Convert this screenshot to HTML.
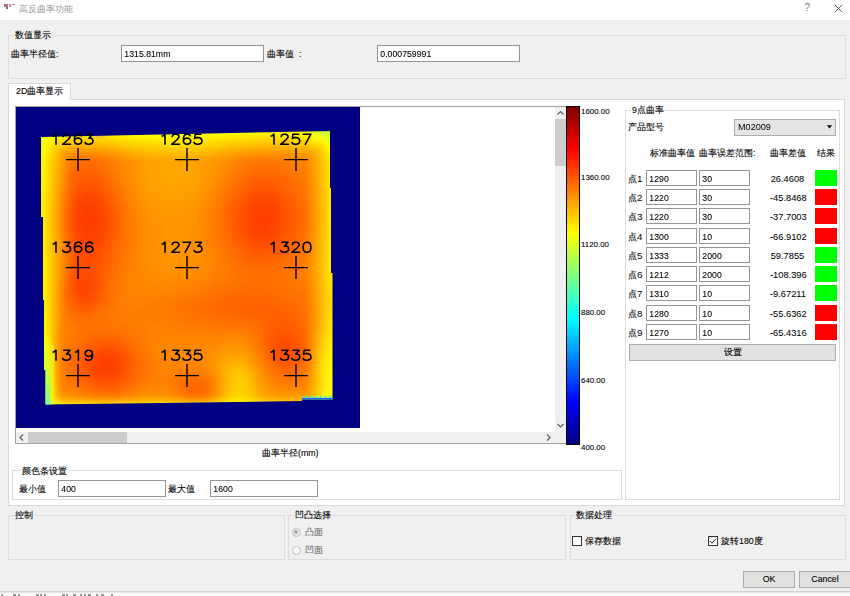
<!DOCTYPE html>
<html><head><meta charset="utf-8">
<style>
*{box-sizing:border-box;margin:0;padding:0}
html,body{width:850px;height:596px;overflow:hidden;background:#f0f0f0;font-family:"Liberation Sans",sans-serif;font-size:8.8px;color:#000}
.a{position:absolute}
.t{position:absolute;white-space:nowrap;line-height:10px;-webkit-text-stroke:0.1px #000}
.grp{position:absolute;border:1px solid #dcdcdc}
.gt{position:absolute;white-space:nowrap;line-height:10px;background:#f0f0f0;padding:0 1px;-webkit-text-stroke:0.1px #000}
.inp{position:absolute;background:#fff;border:1px solid #959595;white-space:nowrap;line-height:15px;padding-left:2px;font-size:9.3px;-webkit-text-stroke:0.05px #000}
.inp span{display:inline-block;font-size:9.8px;transform:scaleX(0.89);transform-origin:0 50%;padding-left:0.4px;-webkit-text-stroke:0.1px #000}
.btn{position:absolute;background:#e1e1e1;border:1px solid #adadad;text-align:center;line-height:15px;-webkit-text-stroke:0.1px #000}
.res{position:absolute;width:22px;height:17px}
</style></head><body>
<!-- title bar -->
<div class="a" style="left:0;top:0;width:850px;height:20px;background:#fff"></div>
<div class="a" style="left:4px;top:4px;width:4px;height:3px;background:#b07078"></div>
<div class="a" style="left:9px;top:4px;width:2px;height:3px;background:#c09090"></div>
<div class="a" style="left:6px;top:7px;width:2px;height:2px;background:#707070"></div>
<div class="a" style="left:12px;top:4px;width:3px;height:1px;background:#a09090"></div>
<div class="t" style="left:19px;top:4px;color:#999;-webkit-text-stroke:0">高反曲率功能</div>
<div class="t" style="left:804.5px;top:3px;color:#777;font-size:10px;-webkit-text-stroke:0">?</div>
<svg class="a" style="left:834px;top:4px" width="9" height="9"><path d="M0.8 0.8L8.2 8.2M8.2 0.8L0.8 8.2" stroke="#555" stroke-width="0.9"/></svg>

<!-- group 数值显示 -->
<div class="grp" style="left:8px;top:35px;width:838px;height:44px"></div>
<div class="gt" style="left:14px;top:30px">数值显示</div>
<div class="t" style="left:11px;top:49px">曲率半径值:</div>
<div class="inp" style="left:121px;top:45px;width:143px;height:17px"><span>1315.81mm</span></div>
<div class="t" style="left:267px;top:49px">曲率值 &nbsp;:</div>
<div class="inp" style="left:377px;top:45px;width:143px;height:17px"><span>0.000759991</span></div>

<!-- tab -->
<div class="a" style="left:8px;top:99px;width:837px;height:407px;background:#fff;border:1px solid #d9d9d9"></div>
<div class="a" style="left:8px;top:83px;width:63px;height:17px;background:#fff;border:1px solid #d9d9d9;border-bottom:none"></div>
<div class="t" style="left:16px;top:86px">2D曲率显示</div>

<!-- scroll area -->
<div class="a" style="left:15px;top:106px;width:552px;height:338px;border:1px solid #a2a2a2;background:#fff"></div>
<div class="a" style="left:16px;top:107px;width:344px;height:321px;background:#000080"></div>
<svg class="a" style="left:16px;top:107px" width="344" height="321" viewBox="16 107 344 321">
<defs><clipPath id="cp"><polygon points="41,137 330,131 330,188 331,188 331,273 332.5,273 332.5,399.5 302,399.5 302,401 45.5,404.5 45.5,370 44,370 44,300 43,300 43,217 41,217"/></clipPath>
<filter id="bl" x="-10%" y="-10%" width="120%" height="120%"><feGaussianBlur stdDeviation="2"/></filter>
</defs>
<g clip-path="url(#cp)"><g filter="url(#bl)">
<path fill="#d5ff2a" d="M38 128h4v4h-4zM322 132h4v4h-4zM42 368h4v4h-4zM46 388h4v4h-4zM334 400h4v4h-4zM250 404h4v4h-4z"/>
<path fill="#d9ff26" d="M42 128h4v4h-4zM314 128h4v4h-4zM38 132h4v4h-4zM42 364h4v4h-4zM38 384h4v4h-4zM46 384h4v4h-4zM38 388h4v4h-4zM326 400h4v4h-4zM222 404h4v4h-4zM254 404h4v4h-4zM310 404h4v4h-4z"/>
<path fill="#e1ff1e" d="M46 128h4v4h-4zM38 136h4v4h-4zM334 136h4v4h-4zM38 364h4v4h-4zM38 368h4v4h-4zM46 372h4v4h-4zM258 404h4v4h-4z"/>
<path fill="#e5ff1a" d="M50 128h4v4h-4zM310 128h4v4h-4zM326 136h4v4h-4zM38 140h4v4h-4zM38 356h8v4h-8zM38 360h4v4h-4zM46 368h4v4h-4zM322 400h4v4h-4zM218 404h4v4h-4zM262 404h4v4h-4z"/>
<path fill="#eaff15" d="M54 128h4v4h-4zM42 132h4v4h-4zM314 132h4v4h-4zM322 136h4v4h-4zM330 140h4v4h-4zM38 144h4v4h-4zM38 352h8v4h-8zM58 404h4v4h-4zM266 404h4v4h-4zM306 404h4v4h-4z"/>
<path fill="#f2ff0d" d="M58 128h4v4h-4zM130 128h16v4h-16zM202 128h16v4h-16zM306 128h4v4h-4zM42 140h4v4h-4zM38 148h4v4h-4zM38 332h4v4h-4zM38 336h4v4h-4zM38 340h4v4h-4zM42 344h4v4h-4zM46 360h4v4h-4zM334 396h4v4h-4zM274 404h32v4h-32z"/>
<path fill="#f6ff09" d="M62 128h4v4h-4zM122 128h8v4h-8zM218 128h16v4h-16zM302 128h4v4h-4zM50 132h4v4h-4zM166 132h16v4h-16zM310 132h4v4h-4zM318 136h4v4h-4zM326 140h4v4h-4zM330 144h4v4h-4zM38 152h4v4h-4zM38 320h4v4h-4zM38 324h4v4h-4zM38 328h4v4h-4zM46 356h4v4h-4zM326 396h4v4h-4zM62 404h12v4h-12zM138 404h32v4h-32zM210 404h4v4h-4z"/>
<path fill="#faff05" d="M66 128h4v4h-4zM110 128h12v4h-12zM234 128h24v4h-24zM290 128h12v4h-12zM54 132h4v4h-4zM146 132h20v4h-20zM182 132h20v4h-20zM42 144h4v4h-4zM334 144h4v4h-4zM38 156h4v4h-4zM38 296h4v4h-4zM38 300h4v4h-4zM38 304h4v4h-4zM38 308h4v4h-4zM38 312h4v4h-4zM38 316h4v4h-4zM42 336h4v4h-4zM42 340h4v4h-4zM330 392h4v4h-4zM318 400h4v4h-4zM74 404h12v4h-12zM126 404h12v4h-12zM170 404h8v4h-8zM206 404h4v4h-4z"/>
<path fill="#feff01" d="M70 128h8v4h-8zM94 128h16v4h-16zM258 128h32v4h-32zM58 132h4v4h-4zM134 132h12v4h-12zM202 132h16v4h-16zM306 132h4v4h-4zM46 136h4v4h-4zM314 136h4v4h-4zM42 148h4v4h-4zM38 160h4v4h-4zM38 164h4v4h-4zM38 168h4v4h-4zM38 172h4v4h-4zM38 176h4v4h-4zM38 180h4v4h-4zM38 260h4v4h-4zM38 264h4v4h-4zM38 268h4v4h-4zM38 272h4v4h-4zM38 276h4v4h-4zM38 280h4v4h-4zM38 284h4v4h-4zM38 288h4v4h-4zM38 292h4v4h-4zM42 332h4v4h-4zM46 352h4v4h-4zM330 388h4v4h-4zM50 396h4v4h-4zM86 404h12v4h-12zM114 404h12v4h-12zM178 404h8v4h-8zM202 404h4v4h-4z"/>
<path fill="#fffc00" d="M78 128h16v4h-16zM62 132h4v4h-4zM126 132h8v4h-8zM218 132h12v4h-12zM326 144h4v4h-4zM330 148h8v4h-8zM38 184h4v4h-4zM38 188h4v4h-4zM38 192h4v4h-4zM38 196h4v4h-4zM38 200h4v4h-4zM38 204h4v4h-4zM38 208h4v4h-4zM38 212h4v4h-4zM38 216h4v4h-4zM38 220h4v4h-4zM38 224h4v4h-4zM38 228h4v4h-4zM38 232h4v4h-4zM38 236h4v4h-4zM38 240h4v4h-4zM38 244h4v4h-4zM38 248h4v4h-4zM38 252h4v4h-4zM38 256h4v4h-4zM42 328h4v4h-4zM46 348h4v4h-4zM330 364h4v4h-4zM330 368h4v4h-4zM330 372h4v4h-4zM330 376h4v4h-4zM330 380h4v4h-4zM330 384h4v4h-4zM326 392h4v4h-4zM334 392h4v4h-4zM322 396h4v4h-4zM98 404h16v4h-16zM186 404h16v4h-16z"/>
<path fill="#eeff11" d="M146 128h56v4h-56zM46 132h4v4h-4zM42 136h4v4h-4zM334 140h4v4h-4zM38 344h4v4h-4zM38 348h8v4h-8zM46 364h4v4h-4zM330 396h4v4h-4zM214 404h4v4h-4zM270 404h4v4h-4z"/>
<path fill="#d1ff2e" d="M318 128h4v4h-4zM42 372h4v4h-4zM38 392h4v4h-4zM46 392h4v4h-4zM226 404h4v4h-4z"/>
<path fill="#c5ff3a" d="M322 128h4v4h-4zM42 392h4v4h-4zM38 396h4v4h-4z"/>
<path fill="#bdff42" d="M326 128h8v4h-8z"/>
<path fill="#c1ff3e" d="M334 128h4v4h-4z"/>
<path fill="#fff400" d="M66 132h4v4h-4zM106 132h8v4h-8zM242 132h56v4h-56zM146 136h20v4h-20zM186 136h16v4h-16zM310 136h4v4h-4zM46 144h4v4h-4zM330 152h8v4h-8zM42 156h4v4h-4zM42 160h4v4h-4zM42 300h4v4h-4zM42 304h4v4h-4zM42 308h4v4h-4zM42 312h4v4h-4zM46 344h4v4h-4zM330 348h4v4h-4zM330 352h4v4h-4zM326 360h4v4h-4zM334 360h4v4h-4zM326 364h4v4h-4zM334 364h4v4h-4zM326 368h4v4h-4zM334 368h4v4h-4zM334 372h4v4h-4zM334 376h4v4h-4zM334 380h4v4h-4zM334 384h4v4h-4zM50 392h4v4h-4zM234 400h4v4h-4zM242 400h4v4h-4z"/>
<path fill="#fff000" d="M70 132h36v4h-36zM54 136h4v4h-4zM134 136h12v4h-12zM202 136h12v4h-12zM318 140h4v4h-4zM326 148h4v4h-4zM42 164h4v4h-4zM42 168h4v4h-4zM42 172h4v4h-4zM42 176h4v4h-4zM42 180h4v4h-4zM42 184h4v4h-4zM42 256h4v4h-4zM42 260h4v4h-4zM42 264h4v4h-4zM42 268h4v4h-4zM42 272h4v4h-4zM42 276h4v4h-4zM42 280h4v4h-4zM42 284h4v4h-4zM42 288h4v4h-4zM42 292h4v4h-4zM42 296h4v4h-4zM46 340h4v4h-4zM330 340h4v4h-4zM330 344h4v4h-4zM334 348h4v4h-4zM334 352h4v4h-4zM326 356h4v4h-4zM334 356h4v4h-4zM50 388h4v4h-4zM322 392h4v4h-4zM230 400h4v4h-4zM246 400h4v4h-4zM314 400h4v4h-4z"/>
<path fill="#fff800" d="M114 132h12v4h-12zM230 132h12v4h-12zM298 132h8v4h-8zM50 136h4v4h-4zM166 136h20v4h-20zM46 140h4v4h-4zM322 140h4v4h-4zM42 152h4v4h-4zM42 316h4v4h-4zM42 320h4v4h-4zM42 324h4v4h-4zM330 356h4v4h-4zM330 360h4v4h-4zM326 372h4v4h-4zM326 376h4v4h-4zM326 380h4v4h-4zM326 384h4v4h-4zM326 388h4v4h-4zM334 388h4v4h-4zM238 400h4v4h-4z"/>
<path fill="#ddff22" d="M318 132h4v4h-4zM330 136h4v4h-4zM42 360h4v4h-4zM38 372h4v4h-4zM38 376h4v4h-4zM46 376h4v4h-4zM38 380h4v4h-4zM46 380h4v4h-4zM50 400h4v4h-4z"/>
<path fill="#cdff32" d="M326 132h4v4h-4zM334 132h4v4h-4zM42 376h4v4h-4zM42 380h4v4h-4zM330 400h4v4h-4zM54 404h4v4h-4zM230 404h4v4h-4zM246 404h4v4h-4z"/>
<path fill="#c9ff36" d="M330 132h4v4h-4zM42 384h4v4h-4zM42 388h4v4h-4zM46 396h4v4h-4zM234 404h12v4h-12zM314 404h4v4h-4z"/>
<path fill="#ffec00" d="M58 136h4v4h-4zM126 136h8v4h-8zM214 136h12v4h-12zM306 136h4v4h-4zM46 148h4v4h-4zM330 156h8v4h-8zM334 160h4v4h-4zM42 188h4v4h-4zM42 192h4v4h-4zM42 196h4v4h-4zM42 200h4v4h-4zM42 204h4v4h-4zM42 208h4v4h-4zM42 212h4v4h-4zM42 216h4v4h-4zM42 220h4v4h-4zM42 224h4v4h-4zM42 228h4v4h-4zM42 232h4v4h-4zM42 236h4v4h-4zM42 240h4v4h-4zM42 244h4v4h-4zM42 248h4v4h-4zM42 252h4v4h-4zM330 332h4v4h-4zM46 336h4v4h-4zM330 336h8v4h-8zM334 340h4v4h-4zM334 344h4v4h-4zM326 352h4v4h-4zM50 384h4v4h-4zM322 388h4v4h-4zM54 400h4v4h-4z"/>
<path fill="#ffe800" d="M62 136h4v4h-4zM118 136h8v4h-8zM226 136h8v4h-8zM302 136h4v4h-4zM50 140h4v4h-4zM162 140h28v4h-28zM314 140h4v4h-4zM322 144h4v4h-4zM46 152h4v4h-4zM326 152h4v4h-4zM330 160h4v4h-4zM330 164h8v4h-8zM330 168h8v4h-8zM330 172h8v4h-8zM330 176h8v4h-8zM330 180h8v4h-8zM330 184h8v4h-8zM330 188h8v4h-8zM330 192h8v4h-8zM330 196h8v4h-8zM330 200h8v4h-8zM330 204h8v4h-8zM330 208h8v4h-8zM330 212h8v4h-8zM330 216h8v4h-8zM330 220h8v4h-8zM330 224h8v4h-8zM330 228h8v4h-8zM330 232h8v4h-8zM330 236h8v4h-8zM330 240h8v4h-8zM330 244h8v4h-8zM330 248h8v4h-8zM330 252h8v4h-8zM330 256h8v4h-8zM330 260h8v4h-8zM330 264h8v4h-8zM330 268h8v4h-8zM330 272h8v4h-8zM330 276h8v4h-8zM330 280h8v4h-8zM330 324h4v4h-4zM330 328h8v4h-8zM46 332h4v4h-4zM334 332h4v4h-4zM326 344h4v4h-4zM326 348h4v4h-4zM322 368h4v4h-4zM322 372h4v4h-4zM50 376h4v4h-4zM322 376h4v4h-4zM50 380h4v4h-4zM322 380h4v4h-4zM322 384h4v4h-4zM318 396h4v4h-4zM226 400h4v4h-4zM250 400h4v4h-4z"/>
<path fill="#ffe300" d="M66 136h4v4h-4zM110 136h8v4h-8zM234 136h16v4h-16zM294 136h8v4h-8zM146 140h16v4h-16zM190 140h12v4h-12zM46 156h4v4h-4zM330 284h8v4h-8zM330 288h8v4h-8zM330 292h8v4h-8zM334 296h4v4h-4zM330 316h8v4h-8zM330 320h8v4h-8zM46 324h4v4h-4zM334 324h4v4h-4zM46 328h4v4h-4zM326 340h4v4h-4zM322 360h4v4h-4zM322 364h4v4h-4zM50 368h4v4h-4zM50 372h4v4h-4z"/>
<path fill="#ffdb00" d="M70 136h32v4h-32zM130 140h8v4h-8zM214 140h8v4h-8zM50 148h4v4h-4zM322 148h4v4h-4zM326 160h4v4h-4zM326 164h4v4h-4zM326 168h4v4h-4zM46 172h4v4h-4zM326 172h4v4h-4zM46 176h4v4h-4zM326 176h4v4h-4zM46 180h4v4h-4zM46 184h4v4h-4zM46 256h4v4h-4zM326 256h4v4h-4zM46 260h4v4h-4zM326 260h4v4h-4zM46 264h4v4h-4zM326 264h4v4h-4zM46 268h4v4h-4zM326 268h4v4h-4zM46 272h4v4h-4zM326 272h4v4h-4zM46 276h4v4h-4zM46 280h4v4h-4zM46 284h4v4h-4zM46 288h4v4h-4zM46 292h4v4h-4zM46 296h4v4h-4zM46 300h4v4h-4zM46 304h4v4h-4zM46 308h4v4h-4zM326 328h4v4h-4zM322 352h4v4h-4zM50 360h4v4h-4zM318 392h4v4h-4zM234 396h12v4h-12zM222 400h4v4h-4zM310 400h4v4h-4z"/>
<path fill="#ffdf00" d="M102 136h8v4h-8zM250 136h44v4h-44zM54 140h4v4h-4zM138 140h8v4h-8zM202 140h12v4h-12zM310 140h4v4h-4zM50 144h4v4h-4zM326 156h4v4h-4zM46 160h4v4h-4zM46 164h4v4h-4zM46 168h4v4h-4zM330 296h4v4h-4zM330 300h8v4h-8zM330 304h8v4h-8zM330 308h8v4h-8zM46 312h4v4h-4zM330 312h8v4h-8zM46 316h4v4h-4zM46 320h4v4h-4zM326 332h4v4h-4zM326 336h4v4h-4zM322 356h4v4h-4zM50 364h4v4h-4zM254 400h4v4h-4z"/>
<path fill="#ffd700" d="M58 140h4v4h-4zM122 140h8v4h-8zM222 140h8v4h-8zM306 140h4v4h-4zM158 144h32v4h-32zM318 144h4v4h-4zM326 180h4v4h-4zM326 184h4v4h-4zM46 188h4v4h-4zM326 188h4v4h-4zM46 192h4v4h-4zM326 192h4v4h-4zM46 196h4v4h-4zM326 196h4v4h-4zM46 200h4v4h-4zM326 200h4v4h-4zM46 204h4v4h-4zM326 204h4v4h-4zM326 208h4v4h-4zM326 212h4v4h-4zM326 216h4v4h-4zM326 220h4v4h-4zM326 224h4v4h-4zM326 228h4v4h-4zM46 232h4v4h-4zM326 232h4v4h-4zM46 236h4v4h-4zM326 236h4v4h-4zM46 240h4v4h-4zM326 240h4v4h-4zM46 244h4v4h-4zM326 244h4v4h-4zM46 248h4v4h-4zM326 248h4v4h-4zM46 252h4v4h-4zM326 252h4v4h-4zM326 276h4v4h-4zM326 280h4v4h-4zM326 284h4v4h-4zM326 320h4v4h-4zM326 324h4v4h-4zM322 348h4v4h-4zM50 356h4v4h-4zM318 388h4v4h-4zM258 400h4v4h-4z"/>
<path fill="#ffd300" d="M62 140h4v4h-4zM114 140h8v4h-8zM230 140h12v4h-12zM302 140h4v4h-4zM146 144h12v4h-12zM190 144h12v4h-12zM314 144h4v4h-4zM50 152h4v4h-4zM322 152h4v4h-4zM46 208h4v4h-4zM46 212h4v4h-4zM46 216h4v4h-4zM46 220h4v4h-4zM46 224h4v4h-4zM46 228h4v4h-4zM326 288h4v4h-4zM326 292h4v4h-4zM326 296h4v4h-4zM326 300h4v4h-4zM326 304h4v4h-4zM326 308h4v4h-4zM326 312h4v4h-4zM326 316h4v4h-4zM322 340h4v4h-4zM322 344h4v4h-4zM50 352h4v4h-4zM318 372h4v4h-4zM318 376h4v4h-4zM318 380h4v4h-4zM318 384h4v4h-4zM238 392h4v4h-4zM230 396h4v4h-4zM246 396h4v4h-4zM314 396h4v4h-4zM218 400h4v4h-4zM262 400h4v4h-4z"/>
<path fill="#ffcf00" d="M66 140h4v4h-4zM110 140h4v4h-4zM242 140h12v4h-12zM290 140h12v4h-12zM54 144h4v4h-4zM138 144h8v4h-8zM202 144h12v4h-12zM50 156h4v4h-4zM322 156h4v4h-4zM322 336h4v4h-4zM50 348h4v4h-4zM318 364h4v4h-4zM318 368h4v4h-4zM238 380h4v4h-4zM238 384h4v4h-4zM234 388h8v4h-8zM234 392h4v4h-4zM242 392h4v4h-4z"/>
<path fill="#ffcb00" d="M70 140h4v4h-4zM102 140h8v4h-8zM254 140h36v4h-36zM130 144h8v4h-8zM214 144h8v4h-8zM310 144h4v4h-4zM54 148h4v4h-4zM318 148h4v4h-4zM50 160h4v4h-4zM322 160h4v4h-4zM50 164h4v4h-4zM322 164h4v4h-4zM50 168h4v4h-4zM322 332h4v4h-4zM50 340h4v4h-4zM50 344h4v4h-4zM318 360h4v4h-4zM234 376h8v4h-8zM234 380h4v4h-4zM242 380h4v4h-4zM234 384h4v4h-4zM242 384h4v4h-4zM242 388h4v4h-4zM230 392h4v4h-4zM246 392h4v4h-4zM54 396h4v4h-4zM226 396h4v4h-4zM250 396h4v4h-4zM58 400h4v4h-4zM266 400h4v4h-4zM306 400h4v4h-4z"/>
<path fill="#ffc700" d="M74 140h28v4h-28zM58 144h4v4h-4zM126 144h4v4h-4zM222 144h4v4h-4zM154 148h40v4h-40zM322 168h4v4h-4zM50 172h4v4h-4zM322 172h4v4h-4zM50 176h4v4h-4zM322 176h4v4h-4zM50 180h4v4h-4zM322 180h4v4h-4zM322 184h4v4h-4zM322 188h4v4h-4zM322 192h4v4h-4zM322 240h4v4h-4zM322 244h4v4h-4zM322 248h4v4h-4zM322 252h4v4h-4zM50 256h4v4h-4zM322 256h4v4h-4zM50 260h4v4h-4zM322 260h4v4h-4zM50 264h4v4h-4zM322 264h4v4h-4zM50 268h4v4h-4zM322 268h4v4h-4zM322 272h4v4h-4zM322 276h4v4h-4zM322 280h4v4h-4zM50 316h4v4h-4zM50 320h4v4h-4zM50 324h4v4h-4zM322 324h4v4h-4zM50 328h4v4h-4zM322 328h4v4h-4zM50 332h4v4h-4zM50 336h4v4h-4zM318 352h4v4h-4zM318 356h4v4h-4zM234 372h8v4h-8zM242 376h4v4h-4zM230 380h4v4h-4zM230 384h4v4h-4zM230 388h4v4h-4zM246 388h4v4h-4zM214 400h4v4h-4zM270 400h8v4h-8z"/>
<path fill="#ffbf00" d="M62 144h4v4h-4zM114 144h4v4h-4zM234 144h12v4h-12zM298 144h8v4h-8zM138 148h8v4h-8zM206 148h8v4h-8zM54 156h4v4h-4zM50 200h4v4h-4zM50 204h4v4h-4zM50 208h4v4h-4zM50 212h4v4h-4zM50 216h4v4h-4zM50 220h4v4h-4zM50 224h4v4h-4zM50 228h4v4h-4zM50 232h4v4h-4zM50 236h4v4h-4zM322 296h4v4h-4zM322 300h4v4h-4zM322 304h4v4h-4zM322 308h4v4h-4zM322 312h4v4h-4zM318 344h4v4h-4zM234 368h8v4h-8zM230 372h4v4h-4zM246 376h4v4h-4zM314 388h4v4h-4zM226 392h4v4h-4zM250 392h4v4h-4zM222 396h4v4h-4zM310 396h4v4h-4zM62 400h12v4h-12zM142 400h28v4h-28z"/>
<path fill="#ffbb00" d="M66 144h4v4h-4zM106 144h8v4h-8zM246 144h16v4h-16zM278 144h20v4h-20zM130 148h8v4h-8zM214 148h4v4h-4zM314 148h4v4h-4zM162 152h24v4h-24zM318 156h4v4h-4zM54 160h4v4h-4zM318 336h4v4h-4zM318 340h4v4h-4zM230 368h4v4h-4zM242 368h4v4h-4zM246 372h4v4h-4zM226 376h4v4h-4zM314 376h4v4h-4zM226 380h4v4h-4zM314 380h4v4h-4zM226 384h4v4h-4zM250 384h4v4h-4zM314 384h4v4h-4zM226 388h4v4h-4zM250 388h4v4h-4zM54 392h4v4h-4zM258 396h4v4h-4zM74 400h8v4h-8zM130 400h12v4h-12zM170 400h4v4h-4zM210 400h4v4h-4z"/>
<path fill="#ffb700" d="M70 144h4v4h-4zM98 144h8v4h-8zM262 144h16v4h-16zM58 148h4v4h-4zM126 148h4v4h-4zM218 148h8v4h-8zM310 148h4v4h-4zM150 152h12v4h-12zM186 152h12v4h-12zM318 160h4v4h-4zM54 164h4v4h-4zM318 164h4v4h-4zM54 168h4v4h-4zM318 168h4v4h-4zM54 172h4v4h-4zM318 172h4v4h-4zM318 176h4v4h-4zM318 180h4v4h-4zM318 256h4v4h-4zM318 260h4v4h-4zM318 264h4v4h-4zM318 268h4v4h-4zM318 272h4v4h-4zM318 276h4v4h-4zM318 332h4v4h-4zM230 364h12v4h-12zM226 368h4v4h-4zM314 368h4v4h-4zM226 372h4v4h-4zM314 372h4v4h-4zM250 380h4v4h-4zM54 388h4v4h-4zM254 392h4v4h-4zM82 400h8v4h-8zM122 400h8v4h-8zM174 400h8v4h-8z"/>
<path fill="#ffb200" d="M74 144h24v4h-24zM122 148h4v4h-4zM226 148h8v4h-8zM58 152h4v4h-4zM142 152h8v4h-8zM198 152h8v4h-8zM314 152h4v4h-4zM54 176h4v4h-4zM54 180h4v4h-4zM318 184h4v4h-4zM318 188h4v4h-4zM318 192h4v4h-4zM318 196h4v4h-4zM318 200h4v4h-4zM318 204h4v4h-4zM318 228h4v4h-4zM318 232h4v4h-4zM318 236h4v4h-4zM318 240h4v4h-4zM318 244h4v4h-4zM318 248h4v4h-4zM318 252h4v4h-4zM318 280h4v4h-4zM318 284h4v4h-4zM318 288h4v4h-4zM318 324h4v4h-4zM318 328h4v4h-4zM234 360h4v4h-4zM314 360h4v4h-4zM242 364h4v4h-4zM314 364h4v4h-4zM246 368h4v4h-4zM250 376h4v4h-4zM54 384h4v4h-4zM254 388h4v4h-4zM262 396h4v4h-4zM90 400h12v4h-12zM110 400h12v4h-12zM182 400h4v4h-4zM206 400h4v4h-4z"/>
<path fill="#ffc300" d="M118 144h8v4h-8zM226 144h8v4h-8zM306 144h4v4h-4zM146 148h8v4h-8zM194 148h12v4h-12zM54 152h4v4h-4zM318 152h4v4h-4zM50 184h4v4h-4zM50 188h4v4h-4zM50 192h4v4h-4zM50 196h4v4h-4zM322 196h4v4h-4zM322 200h4v4h-4zM322 204h4v4h-4zM322 208h4v4h-4zM322 212h4v4h-4zM322 216h4v4h-4zM322 220h4v4h-4zM322 224h4v4h-4zM322 228h4v4h-4zM322 232h4v4h-4zM322 236h4v4h-4zM50 240h4v4h-4zM50 244h4v4h-4zM50 248h4v4h-4zM50 252h4v4h-4zM50 272h4v4h-4zM50 276h4v4h-4zM50 280h4v4h-4zM50 284h4v4h-4zM322 284h4v4h-4zM50 288h4v4h-4zM322 288h4v4h-4zM50 292h4v4h-4zM322 292h4v4h-4zM50 296h4v4h-4zM50 300h4v4h-4zM50 304h4v4h-4zM50 308h4v4h-4zM50 312h4v4h-4zM322 316h4v4h-4zM322 320h4v4h-4zM318 348h4v4h-4zM242 372h4v4h-4zM230 376h4v4h-4zM246 380h4v4h-4zM246 384h4v4h-4zM314 392h4v4h-4zM254 396h4v4h-4zM278 400h28v4h-28z"/>
<path fill="#ffae00" d="M62 148h4v4h-4zM114 148h8v4h-8zM234 148h8v4h-8zM306 148h4v4h-4zM134 152h8v4h-8zM206 152h8v4h-8zM174 156h4v4h-4zM54 184h4v4h-4zM54 188h4v4h-4zM54 192h4v4h-4zM318 208h4v4h-4zM318 212h4v4h-4zM318 216h4v4h-4zM318 220h4v4h-4zM318 224h4v4h-4zM54 244h4v4h-4zM54 248h4v4h-4zM54 252h4v4h-4zM54 256h4v4h-4zM54 260h4v4h-4zM54 264h4v4h-4zM54 268h4v4h-4zM54 272h4v4h-4zM54 276h4v4h-4zM54 280h4v4h-4zM318 292h4v4h-4zM318 296h4v4h-4zM318 300h4v4h-4zM318 308h4v4h-4zM318 312h4v4h-4zM318 316h4v4h-4zM318 320h4v4h-4zM314 356h4v4h-4zM230 360h4v4h-4zM238 360h4v4h-4zM226 364h4v4h-4zM246 364h4v4h-4zM222 372h4v4h-4zM250 372h4v4h-4zM54 376h4v4h-4zM222 376h4v4h-4zM54 380h4v4h-4zM254 384h4v4h-4zM222 392h4v4h-4zM258 392h4v4h-4zM310 392h4v4h-4zM218 396h4v4h-4zM306 396h4v4h-4zM102 400h8v4h-8zM186 400h4v4h-4zM202 400h4v4h-4z"/>
<path fill="#ffa600" d="M66 148h4v4h-4zM106 148h4v4h-4zM250 148h44v4h-44zM126 152h4v4h-4zM218 152h8v4h-8zM146 156h8v4h-8zM194 156h8v4h-8zM58 160h4v4h-4zM158 160h32v4h-32zM314 160h4v4h-4zM58 164h4v4h-4zM158 164h32v4h-32zM314 164h4v4h-4zM154 168h36v4h-36zM314 168h4v4h-4zM158 172h32v4h-32zM314 172h4v4h-4zM158 176h32v4h-32zM162 180h24v4h-24zM166 184h12v4h-12zM54 212h4v4h-4zM54 216h4v4h-4zM54 220h4v4h-4zM54 224h4v4h-4zM314 260h4v4h-4zM314 264h4v4h-4zM314 268h4v4h-4zM314 272h4v4h-4zM314 276h4v4h-4zM54 332h4v4h-4zM54 336h4v4h-4zM54 340h4v4h-4zM314 340h4v4h-4zM54 344h4v4h-4zM314 344h4v4h-4zM54 348h4v4h-4zM54 352h4v4h-4zM54 356h4v4h-4zM230 356h4v4h-4zM238 356h4v4h-4zM54 360h4v4h-4zM246 360h4v4h-4zM254 376h4v4h-4zM310 384h4v4h-4zM258 388h4v4h-4zM270 396h8v4h-8z"/>
<path fill="#ffa200" d="M70 148h4v4h-4zM98 148h8v4h-8zM62 152h4v4h-4zM122 152h4v4h-4zM226 152h4v4h-4zM310 152h4v4h-4zM138 156h8v4h-8zM202 156h8v4h-8zM150 160h8v4h-8zM190 160h8v4h-8zM150 164h8v4h-8zM190 164h8v4h-8zM58 168h4v4h-4zM150 168h4v4h-4zM190 168h8v4h-8zM58 172h4v4h-4zM150 172h8v4h-8zM190 172h8v4h-8zM150 176h8v4h-8zM190 176h8v4h-8zM314 176h4v4h-4zM150 180h12v4h-12zM186 180h8v4h-8zM314 180h4v4h-4zM154 184h12v4h-12zM178 184h12v4h-12zM314 184h4v4h-4zM158 188h28v4h-28zM314 188h4v4h-4zM162 192h20v4h-20zM314 192h4v4h-4zM314 244h4v4h-4zM314 248h4v4h-4zM314 252h4v4h-4zM314 256h4v4h-4zM314 280h4v4h-4zM314 284h4v4h-4zM314 288h4v4h-4zM314 332h4v4h-4zM314 336h4v4h-4zM234 352h4v4h-4zM226 356h4v4h-4zM242 356h4v4h-4zM222 360h4v4h-4zM218 364h4v4h-4zM250 364h4v4h-4zM218 368h4v4h-4zM218 372h4v4h-4zM254 372h4v4h-4zM310 376h4v4h-4zM310 380h4v4h-4zM258 384h4v4h-4zM218 392h4v4h-4zM262 392h4v4h-4zM214 396h4v4h-4zM278 396h28v4h-28z"/>
<path fill="#ff9e00" d="M74 148h24v4h-24zM118 152h4v4h-4zM230 152h8v4h-8zM306 152h4v4h-4zM134 156h4v4h-4zM210 156h4v4h-4zM142 160h8v4h-8zM198 160h8v4h-8zM142 164h8v4h-8zM198 164h8v4h-8zM142 168h8v4h-8zM198 168h8v4h-8zM142 172h8v4h-8zM198 172h4v4h-4zM58 176h4v4h-4zM146 176h4v4h-4zM198 176h4v4h-4zM58 180h4v4h-4zM146 180h4v4h-4zM194 180h8v4h-8zM146 184h8v4h-8zM190 184h8v4h-8zM150 188h8v4h-8zM186 188h8v4h-8zM154 192h8v4h-8zM182 192h12v4h-12zM158 196h32v4h-32zM314 196h4v4h-4zM162 200h20v4h-20zM314 200h4v4h-4zM314 204h4v4h-4zM314 208h4v4h-4zM314 212h4v4h-4zM314 216h4v4h-4zM314 220h4v4h-4zM314 224h4v4h-4zM314 228h4v4h-4zM314 232h4v4h-4zM314 236h4v4h-4zM314 240h4v4h-4zM314 292h4v4h-4zM314 296h4v4h-4zM314 320h4v4h-4zM314 324h4v4h-4zM314 328h4v4h-4zM226 352h8v4h-8zM238 352h8v4h-8zM222 356h4v4h-4zM246 356h4v4h-4zM218 360h4v4h-4zM254 368h4v4h-4zM310 372h4v4h-4zM218 376h4v4h-4zM218 380h4v4h-4zM258 380h4v4h-4zM262 388h4v4h-4zM266 392h4v4h-4zM306 392h4v4h-4zM62 396h8v4h-8zM142 396h24v4h-24z"/>
<path fill="#ffaa00" d="M110 148h4v4h-4zM242 148h8v4h-8zM294 148h12v4h-12zM130 152h4v4h-4zM214 152h4v4h-4zM58 156h4v4h-4zM154 156h20v4h-20zM178 156h16v4h-16zM314 156h4v4h-4zM54 196h4v4h-4zM54 200h4v4h-4zM54 204h4v4h-4zM54 208h4v4h-4zM54 228h4v4h-4zM54 232h4v4h-4zM54 236h4v4h-4zM54 240h4v4h-4zM54 284h4v4h-4zM54 288h4v4h-4zM54 292h4v4h-4zM54 296h4v4h-4zM54 300h4v4h-4zM54 304h4v4h-4zM318 304h4v4h-4zM54 308h4v4h-4zM54 312h4v4h-4zM54 316h4v4h-4zM54 320h4v4h-4zM54 324h4v4h-4zM54 328h4v4h-4zM314 348h4v4h-4zM314 352h4v4h-4zM234 356h4v4h-4zM226 360h4v4h-4zM242 360h4v4h-4zM54 364h4v4h-4zM222 364h4v4h-4zM54 368h4v4h-4zM222 368h4v4h-4zM250 368h4v4h-4zM54 372h4v4h-4zM222 380h4v4h-4zM254 380h4v4h-4zM222 384h4v4h-4zM222 388h4v4h-4zM310 388h4v4h-4zM58 396h4v4h-4zM266 396h4v4h-4zM190 400h12v4h-12z"/>
<path fill="#ff9600" d="M66 152h4v4h-4zM106 152h8v4h-8zM246 152h8v4h-8zM282 152h16v4h-16zM126 156h4v4h-4zM222 156h4v4h-4zM62 160h4v4h-4zM134 160h4v4h-4zM210 160h8v4h-8zM62 164h4v4h-4zM134 164h4v4h-4zM210 164h4v4h-4zM310 164h4v4h-4zM134 168h4v4h-4zM210 168h4v4h-4zM310 168h4v4h-4zM134 172h4v4h-4zM210 172h4v4h-4zM310 172h4v4h-4zM134 176h4v4h-4zM206 176h4v4h-4zM138 180h4v4h-4zM206 180h4v4h-4zM138 184h4v4h-4zM202 184h4v4h-4zM138 188h8v4h-8zM202 188h4v4h-4zM58 192h4v4h-4zM142 192h4v4h-4zM198 192h4v4h-4zM58 196h4v4h-4zM142 196h8v4h-8zM194 196h8v4h-8zM58 200h4v4h-4zM146 200h4v4h-4zM194 200h4v4h-4zM146 204h8v4h-8zM190 204h8v4h-8zM150 208h8v4h-8zM186 208h8v4h-8zM154 212h8v4h-8zM182 212h8v4h-8zM154 216h36v4h-36zM158 220h32v4h-32zM158 224h28v4h-28zM162 228h24v4h-24zM162 232h24v4h-24zM58 236h4v4h-4zM162 236h24v4h-24zM58 240h4v4h-4zM162 240h24v4h-24zM58 244h4v4h-4zM162 244h24v4h-24zM162 248h24v4h-24zM166 252h20v4h-20zM166 256h20v4h-20zM170 260h12v4h-12zM310 260h4v4h-4zM310 264h4v4h-4zM310 268h4v4h-4zM310 272h4v4h-4zM58 276h4v4h-4zM310 276h4v4h-4zM58 280h4v4h-4zM58 308h4v4h-4zM58 312h4v4h-4zM58 316h4v4h-4zM58 320h4v4h-4zM222 348h8v4h-8zM242 348h4v4h-4zM218 352h4v4h-4zM246 352h4v4h-4zM214 356h4v4h-4zM250 356h4v4h-4zM214 360h4v4h-4zM310 360h4v4h-4zM254 364h4v4h-4zM214 368h4v4h-4zM214 372h4v4h-4zM258 372h4v4h-4zM262 380h4v4h-4zM266 388h4v4h-4zM306 388h4v4h-4zM274 392h4v4h-4zM74 396h8v4h-8zM130 396h8v4h-8zM174 396h4v4h-4zM210 396h4v4h-4z"/>
<path fill="#ff9200" d="M70 152h4v4h-4zM102 152h4v4h-4zM254 152h28v4h-28zM122 156h4v4h-4zM226 156h4v4h-4zM126 160h8v4h-8zM218 160h4v4h-4zM130 164h4v4h-4zM214 164h4v4h-4zM62 168h4v4h-4zM130 168h4v4h-4zM214 168h4v4h-4zM130 172h4v4h-4zM214 172h4v4h-4zM130 176h4v4h-4zM210 176h4v4h-4zM310 176h4v4h-4zM134 180h4v4h-4zM210 180h4v4h-4zM310 180h4v4h-4zM134 184h4v4h-4zM206 184h4v4h-4zM310 184h4v4h-4zM206 188h4v4h-4zM138 192h4v4h-4zM202 192h4v4h-4zM138 196h4v4h-4zM202 196h4v4h-4zM142 200h4v4h-4zM198 200h4v4h-4zM58 204h4v4h-4zM142 204h4v4h-4zM198 204h4v4h-4zM58 208h4v4h-4zM146 208h4v4h-4zM194 208h4v4h-4zM58 212h4v4h-4zM146 212h8v4h-8zM190 212h8v4h-8zM58 216h4v4h-4zM150 216h4v4h-4zM190 216h8v4h-8zM58 220h4v4h-4zM150 220h8v4h-8zM190 220h4v4h-4zM58 224h4v4h-4zM150 224h8v4h-8zM186 224h8v4h-8zM58 228h4v4h-4zM150 228h12v4h-12zM186 228h8v4h-8zM58 232h4v4h-4zM154 232h8v4h-8zM186 232h8v4h-8zM154 236h8v4h-8zM186 236h8v4h-8zM154 240h8v4h-8zM186 240h8v4h-8zM154 244h8v4h-8zM186 244h8v4h-8zM154 248h8v4h-8zM186 248h12v4h-12zM310 248h4v4h-4zM154 252h12v4h-12zM186 252h12v4h-12zM310 252h4v4h-4zM154 256h12v4h-12zM186 256h12v4h-12zM310 256h4v4h-4zM154 260h16v4h-16zM182 260h12v4h-12zM158 264h36v4h-36zM162 268h28v4h-28zM170 272h8v4h-8zM310 280h4v4h-4zM58 284h4v4h-4zM310 284h4v4h-4zM58 288h4v4h-4zM310 288h4v4h-4zM58 292h4v4h-4zM58 296h4v4h-4zM58 300h4v4h-4zM58 304h4v4h-4zM58 324h4v4h-4zM58 328h4v4h-4zM222 344h20v4h-20zM218 348h4v4h-4zM246 348h4v4h-4zM214 352h4v4h-4zM310 352h4v4h-4zM210 356h4v4h-4zM310 356h4v4h-4zM210 360h4v4h-4zM254 360h4v4h-4zM210 364h4v4h-4zM258 368h4v4h-4zM214 376h4v4h-4zM262 376h4v4h-4zM266 384h4v4h-4zM306 384h4v4h-4zM58 388h4v4h-4zM270 388h4v4h-4zM214 392h4v4h-4zM278 392h28v4h-28zM82 396h8v4h-8zM122 396h8v4h-8zM178 396h4v4h-4z"/>
<path fill="#ff8e00" d="M74 152h4v4h-4zM94 152h8v4h-8zM118 156h4v4h-4zM230 156h8v4h-8zM306 156h4v4h-4zM222 160h4v4h-4zM126 164h4v4h-4zM218 164h8v4h-8zM126 168h4v4h-4zM218 168h4v4h-4zM62 172h4v4h-4zM126 172h4v4h-4zM218 172h4v4h-4zM62 176h4v4h-4zM214 176h4v4h-4zM130 180h4v4h-4zM214 180h4v4h-4zM130 184h4v4h-4zM210 184h4v4h-4zM134 188h4v4h-4zM210 188h4v4h-4zM310 188h4v4h-4zM134 192h4v4h-4zM206 192h4v4h-4zM310 192h4v4h-4zM134 196h4v4h-4zM206 196h4v4h-4zM310 196h4v4h-4zM138 200h4v4h-4zM202 200h4v4h-4zM310 200h4v4h-4zM138 204h4v4h-4zM202 204h4v4h-4zM310 204h4v4h-4zM142 208h4v4h-4zM198 208h4v4h-4zM142 212h4v4h-4zM198 212h4v4h-4zM142 216h8v4h-8zM198 216h4v4h-4zM142 220h8v4h-8zM194 220h8v4h-8zM146 224h4v4h-4zM194 224h8v4h-8zM146 228h4v4h-4zM194 228h8v4h-8zM146 232h8v4h-8zM194 232h8v4h-8zM310 232h4v4h-4zM146 236h8v4h-8zM194 236h8v4h-8zM310 236h4v4h-4zM146 240h8v4h-8zM194 240h8v4h-8zM310 240h4v4h-4zM146 244h8v4h-8zM194 244h8v4h-8zM310 244h4v4h-4zM146 248h8v4h-8zM198 248h4v4h-4zM146 252h8v4h-8zM198 252h4v4h-4zM146 256h8v4h-8zM198 256h4v4h-4zM146 260h8v4h-8zM194 260h8v4h-8zM146 264h12v4h-12zM194 264h8v4h-8zM150 268h12v4h-12zM190 268h8v4h-8zM150 272h20v4h-20zM178 272h16v4h-16zM158 276h28v4h-28zM310 292h4v4h-4zM310 296h4v4h-4zM58 332h4v4h-4zM58 336h4v4h-4zM310 336h4v4h-4zM226 340h12v4h-12zM310 340h4v4h-4zM214 344h8v4h-8zM242 344h4v4h-4zM310 344h4v4h-4zM210 348h8v4h-8zM310 348h4v4h-4zM206 352h8v4h-8zM250 352h4v4h-4zM206 356h4v4h-4zM206 360h4v4h-4zM206 364h4v4h-4zM210 368h4v4h-4zM214 380h4v4h-4zM266 380h4v4h-4zM306 380h4v4h-4zM58 384h4v4h-4zM274 388h4v4h-4zM62 392h8v4h-8zM146 392h20v4h-20zM90 396h4v4h-4zM118 396h4v4h-4zM206 396h4v4h-4z"/>
<path fill="#ff8a00" d="M78 152h16v4h-16zM66 156h4v4h-4zM114 156h4v4h-4zM238 156h4v4h-4zM298 156h8v4h-8zM122 160h4v4h-4zM226 160h4v4h-4zM306 160h4v4h-4zM122 164h4v4h-4zM226 164h4v4h-4zM306 164h4v4h-4zM122 168h4v4h-4zM222 168h4v4h-4zM222 172h4v4h-4zM126 176h4v4h-4zM218 176h4v4h-4zM62 180h4v4h-4zM126 180h4v4h-4zM214 184h4v4h-4zM130 188h4v4h-4zM130 192h4v4h-4zM210 192h4v4h-4zM210 196h4v4h-4zM134 200h4v4h-4zM206 200h4v4h-4zM134 204h4v4h-4zM206 204h4v4h-4zM138 208h4v4h-4zM202 208h4v4h-4zM310 208h4v4h-4zM138 212h4v4h-4zM202 212h4v4h-4zM310 212h4v4h-4zM138 216h4v4h-4zM202 216h4v4h-4zM310 216h4v4h-4zM138 220h4v4h-4zM202 220h4v4h-4zM310 220h4v4h-4zM142 224h4v4h-4zM202 224h4v4h-4zM310 224h4v4h-4zM142 228h4v4h-4zM202 228h4v4h-4zM310 228h4v4h-4zM142 232h4v4h-4zM202 232h4v4h-4zM142 236h4v4h-4zM202 236h4v4h-4zM142 240h4v4h-4zM202 240h4v4h-4zM142 244h4v4h-4zM202 244h4v4h-4zM142 248h4v4h-4zM202 248h4v4h-4zM142 252h4v4h-4zM202 252h4v4h-4zM142 256h4v4h-4zM202 256h8v4h-8zM142 260h4v4h-4zM202 260h8v4h-8zM142 264h4v4h-4zM202 264h8v4h-8zM142 268h8v4h-8zM198 268h8v4h-8zM142 272h8v4h-8zM194 272h8v4h-8zM142 276h16v4h-16zM186 276h12v4h-12zM146 280h44v4h-44zM162 284h8v4h-8zM310 300h4v4h-4zM310 304h4v4h-4zM310 308h4v4h-4zM310 312h4v4h-4zM310 316h4v4h-4zM310 320h4v4h-4zM310 324h4v4h-4zM310 328h4v4h-4zM310 332h4v4h-4zM58 340h4v4h-4zM214 340h12v4h-12zM238 340h8v4h-8zM58 344h4v4h-4zM202 344h12v4h-12zM246 344h4v4h-4zM58 348h4v4h-4zM178 348h32v4h-32zM250 348h4v4h-4zM58 352h4v4h-4zM174 352h32v4h-32zM174 356h32v4h-32zM254 356h4v4h-4zM194 360h12v4h-12zM202 364h4v4h-4zM258 364h4v4h-4zM206 368h4v4h-4zM58 372h4v4h-4zM210 372h4v4h-4zM262 372h4v4h-4zM306 372h4v4h-4zM58 376h4v4h-4zM306 376h4v4h-4zM58 380h4v4h-4zM214 384h4v4h-4zM270 384h4v4h-4zM154 388h8v4h-8zM214 388h4v4h-4zM278 388h8v4h-8zM294 388h12v4h-12zM70 392h4v4h-4zM138 392h8v4h-8zM166 392h8v4h-8zM94 396h24v4h-24zM182 396h4v4h-4z"/>
<path fill="#ff9a00" d="M114 152h4v4h-4zM238 152h8v4h-8zM298 152h8v4h-8zM62 156h4v4h-4zM130 156h4v4h-4zM214 156h8v4h-8zM310 156h4v4h-4zM138 160h4v4h-4zM206 160h4v4h-4zM310 160h4v4h-4zM138 164h4v4h-4zM206 164h4v4h-4zM138 168h4v4h-4zM206 168h4v4h-4zM138 172h4v4h-4zM202 172h8v4h-8zM138 176h8v4h-8zM202 176h4v4h-4zM142 180h4v4h-4zM202 180h4v4h-4zM58 184h4v4h-4zM142 184h4v4h-4zM198 184h4v4h-4zM58 188h4v4h-4zM146 188h4v4h-4zM194 188h8v4h-8zM146 192h8v4h-8zM194 192h4v4h-4zM150 196h8v4h-8zM190 196h4v4h-4zM150 200h12v4h-12zM182 200h12v4h-12zM154 204h36v4h-36zM158 208h28v4h-28zM162 212h20v4h-20zM58 248h4v4h-4zM58 252h4v4h-4zM58 256h4v4h-4zM58 260h4v4h-4zM58 264h4v4h-4zM58 268h4v4h-4zM58 272h4v4h-4zM314 300h4v4h-4zM314 304h4v4h-4zM314 308h4v4h-4zM314 312h4v4h-4zM314 316h4v4h-4zM230 348h12v4h-12zM222 352h4v4h-4zM218 356h4v4h-4zM250 360h4v4h-4zM214 364h4v4h-4zM310 364h4v4h-4zM310 368h4v4h-4zM258 376h4v4h-4zM218 384h4v4h-4zM262 384h4v4h-4zM218 388h4v4h-4zM58 392h4v4h-4zM270 392h4v4h-4zM70 396h4v4h-4zM138 396h4v4h-4zM166 396h8v4h-8z"/>
<path fill="#ff7d00" d="M70 156h4v4h-4zM98 156h8v4h-8zM266 156h4v4h-4zM110 160h4v4h-4zM242 160h4v4h-4zM290 160h8v4h-8zM110 164h4v4h-4zM238 164h4v4h-4zM294 164h8v4h-8zM114 168h4v4h-4zM234 168h4v4h-4zM298 168h8v4h-8zM66 172h4v4h-4zM114 172h4v4h-4zM230 172h4v4h-4zM302 172h4v4h-4zM118 176h4v4h-4zM230 176h4v4h-4zM118 180h4v4h-4zM226 180h4v4h-4zM122 188h4v4h-4zM222 188h4v4h-4zM122 192h4v4h-4zM218 192h4v4h-4zM306 192h4v4h-4zM218 196h4v4h-4zM306 196h4v4h-4zM62 200h4v4h-4zM126 200h4v4h-4zM306 200h4v4h-4zM62 204h4v4h-4zM126 204h4v4h-4zM214 204h4v4h-4zM62 208h4v4h-4zM214 208h4v4h-4zM130 216h4v4h-4zM130 220h4v4h-4zM210 220h4v4h-4zM130 224h4v4h-4zM210 224h4v4h-4zM62 228h4v4h-4zM130 228h4v4h-4zM210 228h4v4h-4zM62 232h4v4h-4zM130 232h4v4h-4zM210 232h4v4h-4zM306 232h4v4h-4zM62 236h4v4h-4zM130 236h4v4h-4zM306 236h4v4h-4zM130 240h4v4h-4zM214 240h4v4h-4zM306 240h4v4h-4zM130 244h4v4h-4zM214 244h4v4h-4zM306 244h4v4h-4zM130 248h4v4h-4zM214 248h4v4h-4zM218 252h4v4h-4zM126 256h4v4h-4zM218 256h4v4h-4zM126 260h4v4h-4zM218 260h4v4h-4zM126 264h4v4h-4zM218 264h8v4h-8zM302 264h4v4h-4zM126 268h4v4h-4zM218 268h8v4h-8zM302 268h4v4h-4zM122 272h4v4h-4zM218 272h8v4h-8zM298 272h8v4h-8zM62 276h4v4h-4zM122 276h4v4h-4zM214 276h8v4h-8zM298 276h8v4h-8zM62 280h4v4h-4zM122 280h4v4h-4zM210 280h8v4h-8zM302 280h4v4h-4zM62 284h4v4h-4zM122 284h4v4h-4zM202 284h8v4h-8zM122 288h4v4h-4zM190 288h12v4h-12zM118 292h8v4h-8zM178 292h12v4h-12zM118 296h8v4h-8zM162 296h16v4h-16zM306 296h4v4h-4zM62 300h4v4h-4zM118 300h8v4h-8zM150 300h20v4h-20zM306 300h4v4h-4zM62 304h4v4h-4zM118 304h12v4h-12zM146 304h20v4h-20zM62 308h4v4h-4zM118 308h16v4h-16zM138 308h24v4h-24zM118 312h48v4h-48zM118 316h52v4h-52zM66 320h4v4h-4zM122 320h24v4h-24zM150 320h28v4h-28zM66 324h4v4h-4zM130 324h16v4h-16zM166 324h24v4h-24zM66 328h8v4h-8zM134 328h12v4h-12zM182 328h32v4h-32zM66 332h8v4h-8zM138 332h8v4h-8zM242 332h8v4h-8zM66 336h4v4h-4zM142 336h4v4h-4zM250 336h4v4h-4zM62 340h8v4h-8zM142 340h8v4h-8zM62 344h4v4h-4zM146 344h4v4h-4zM254 344h4v4h-4zM62 348h4v4h-4zM146 348h4v4h-4zM150 352h4v4h-4zM258 352h4v4h-4zM150 356h4v4h-4zM150 360h4v4h-4zM306 360h4v4h-4zM150 364h4v4h-4zM150 368h4v4h-4zM266 368h4v4h-4zM150 372h4v4h-4zM178 372h8v4h-8zM202 372h4v4h-4zM62 376h4v4h-4zM146 376h8v4h-8zM174 376h4v4h-4zM206 376h4v4h-4zM302 376h4v4h-4zM62 380h4v4h-4zM146 380h4v4h-4zM170 380h4v4h-4zM278 380h4v4h-4zM294 380h8v4h-8zM66 384h4v4h-4zM142 384h4v4h-4zM170 384h4v4h-4zM210 384h4v4h-4zM74 388h4v4h-4zM134 388h8v4h-8zM174 388h4v4h-4zM210 388h4v4h-4zM82 392h8v4h-8zM122 392h8v4h-8zM178 392h4v4h-4z"/>
<path fill="#ff7900" d="M74 156h24v4h-24zM70 160h4v4h-4zM106 160h4v4h-4zM246 160h8v4h-8zM278 160h12v4h-12zM242 164h4v4h-4zM286 164h8v4h-8zM110 168h4v4h-4zM238 168h4v4h-4zM294 168h4v4h-4zM234 172h4v4h-4zM298 172h4v4h-4zM66 176h4v4h-4zM114 176h4v4h-4zM298 176h8v4h-8zM66 180h4v4h-4zM230 180h4v4h-4zM302 180h4v4h-4zM118 184h4v4h-4zM226 184h4v4h-4zM222 192h4v4h-4zM122 196h4v4h-4zM122 200h4v4h-4zM218 200h4v4h-4zM218 204h4v4h-4zM306 204h4v4h-4zM126 208h4v4h-4zM306 208h4v4h-4zM62 212h4v4h-4zM126 212h4v4h-4zM214 212h4v4h-4zM306 212h4v4h-4zM62 216h4v4h-4zM126 216h4v4h-4zM214 216h4v4h-4zM306 216h4v4h-4zM62 220h4v4h-4zM126 220h4v4h-4zM214 220h4v4h-4zM306 220h4v4h-4zM62 224h4v4h-4zM126 224h4v4h-4zM214 224h4v4h-4zM306 224h4v4h-4zM214 228h4v4h-4zM306 228h4v4h-4zM126 232h4v4h-4zM214 232h4v4h-4zM126 236h4v4h-4zM214 236h4v4h-4zM126 240h4v4h-4zM126 244h4v4h-4zM218 244h4v4h-4zM126 248h4v4h-4zM218 248h4v4h-4zM126 252h4v4h-4zM222 252h4v4h-4zM302 252h4v4h-4zM222 256h4v4h-4zM302 256h4v4h-4zM122 260h4v4h-4zM222 260h8v4h-8zM298 260h8v4h-8zM122 264h4v4h-4zM226 264h4v4h-4zM294 264h8v4h-8zM122 268h4v4h-4zM226 268h4v4h-4zM294 268h8v4h-8zM118 272h4v4h-4zM226 272h4v4h-4zM290 272h8v4h-8zM118 276h4v4h-4zM222 276h8v4h-8zM290 276h8v4h-8zM118 280h4v4h-4zM218 280h8v4h-8zM294 280h8v4h-8zM118 284h4v4h-4zM210 284h8v4h-8zM294 284h12v4h-12zM62 288h4v4h-4zM118 288h4v4h-4zM202 288h8v4h-8zM298 288h8v4h-8zM62 292h4v4h-4zM114 292h4v4h-4zM190 292h12v4h-12zM62 296h4v4h-4zM114 296h4v4h-4zM178 296h12v4h-12zM114 300h4v4h-4zM170 300h12v4h-12zM114 304h4v4h-4zM166 304h12v4h-12zM306 304h4v4h-4zM110 308h8v4h-8zM162 308h16v4h-16zM306 308h4v4h-4zM110 312h8v4h-8zM166 312h12v4h-12zM306 312h4v4h-4zM66 316h4v4h-4zM110 316h8v4h-8zM170 316h12v4h-12zM306 316h4v4h-4zM70 320h4v4h-4zM110 320h12v4h-12zM178 320h16v4h-16zM306 320h4v4h-4zM70 324h8v4h-8zM118 324h12v4h-12zM190 324h20v4h-20zM306 324h4v4h-4zM74 328h4v4h-4zM126 328h8v4h-8zM214 328h32v4h-32zM306 328h4v4h-4zM74 332h4v4h-4zM130 332h8v4h-8zM250 332h4v4h-4zM306 332h4v4h-4zM70 336h4v4h-4zM134 336h8v4h-8zM70 340h4v4h-4zM138 340h4v4h-4zM254 340h4v4h-4zM66 344h4v4h-4zM142 344h4v4h-4zM66 348h4v4h-4zM142 348h4v4h-4zM258 348h4v4h-4zM62 352h4v4h-4zM146 352h4v4h-4zM306 352h4v4h-4zM62 356h4v4h-4zM146 356h4v4h-4zM306 356h4v4h-4zM62 360h4v4h-4zM146 360h4v4h-4zM262 360h4v4h-4zM62 364h4v4h-4zM146 364h4v4h-4zM62 368h4v4h-4zM146 368h4v4h-4zM62 372h4v4h-4zM146 372h4v4h-4zM186 372h16v4h-16zM270 372h4v4h-4zM302 372h4v4h-4zM178 376h4v4h-4zM274 376h4v4h-4zM298 376h4v4h-4zM66 380h4v4h-4zM142 380h4v4h-4zM174 380h4v4h-4zM282 380h12v4h-12zM70 384h4v4h-4zM138 384h4v4h-4zM174 384h4v4h-4zM78 388h4v4h-4zM130 388h4v4h-4zM90 392h4v4h-4zM118 392h4v4h-4zM182 392h4v4h-4zM206 392h4v4h-4z"/>
<path fill="#ff8200" d="M106 156h4v4h-4zM250 156h16v4h-16zM270 156h16v4h-16zM114 160h4v4h-4zM234 160h8v4h-8zM298 160h8v4h-8zM66 164h4v4h-4zM114 164h4v4h-4zM234 164h4v4h-4zM302 164h4v4h-4zM66 168h4v4h-4zM230 168h4v4h-4zM118 172h4v4h-4zM226 172h4v4h-4zM226 176h4v4h-4zM122 180h4v4h-4zM222 180h4v4h-4zM306 180h4v4h-4zM122 184h4v4h-4zM222 184h4v4h-4zM306 184h4v4h-4zM218 188h4v4h-4zM306 188h4v4h-4zM62 192h4v4h-4zM126 192h4v4h-4zM62 196h4v4h-4zM126 196h4v4h-4zM214 196h4v4h-4zM214 200h4v4h-4zM130 204h4v4h-4zM130 208h4v4h-4zM210 208h4v4h-4zM130 212h4v4h-4zM210 212h4v4h-4zM210 216h4v4h-4zM134 220h4v4h-4zM134 224h4v4h-4zM134 228h4v4h-4zM134 232h4v4h-4zM134 236h4v4h-4zM210 236h4v4h-4zM62 240h4v4h-4zM134 240h4v4h-4zM210 240h4v4h-4zM62 244h4v4h-4zM134 244h4v4h-4zM210 244h4v4h-4zM62 248h4v4h-4zM134 248h4v4h-4zM210 248h4v4h-4zM306 248h4v4h-4zM130 252h4v4h-4zM214 252h4v4h-4zM306 252h4v4h-4zM130 256h4v4h-4zM214 256h4v4h-4zM130 260h4v4h-4zM214 260h4v4h-4zM130 264h4v4h-4zM214 264h4v4h-4zM62 268h4v4h-4zM130 268h4v4h-4zM214 268h4v4h-4zM62 272h4v4h-4zM126 272h8v4h-8zM210 272h8v4h-8zM126 276h8v4h-8zM206 276h8v4h-8zM126 280h8v4h-8zM202 280h8v4h-8zM126 284h8v4h-8zM190 284h12v4h-12zM126 288h12v4h-12zM174 288h16v4h-16zM306 288h4v4h-4zM126 292h52v4h-52zM306 292h4v4h-4zM126 296h36v4h-36zM126 300h24v4h-24zM130 304h16v4h-16zM134 308h4v4h-4zM62 312h4v4h-4zM62 316h4v4h-4zM62 320h4v4h-4zM146 320h4v4h-4zM62 324h4v4h-4zM146 324h20v4h-20zM62 328h4v4h-4zM146 328h36v4h-36zM62 332h4v4h-4zM146 332h96v4h-96zM62 336h4v4h-4zM146 336h16v4h-16zM190 336h20v4h-20zM242 336h8v4h-8zM150 340h8v4h-8zM250 340h4v4h-4zM150 344h8v4h-8zM150 348h8v4h-8zM254 348h4v4h-4zM154 352h4v4h-4zM154 356h4v4h-4zM258 356h4v4h-4zM154 360h8v4h-8zM154 364h8v4h-8zM262 364h4v4h-4zM306 364h4v4h-4zM154 368h8v4h-8zM178 368h24v4h-24zM154 372h24v4h-24zM266 372h4v4h-4zM154 376h20v4h-20zM270 376h4v4h-4zM150 380h20v4h-20zM210 380h4v4h-4zM274 380h4v4h-4zM302 380h4v4h-4zM62 384h4v4h-4zM146 384h8v4h-8zM162 384h8v4h-8zM278 384h20v4h-20zM66 388h8v4h-8zM142 388h4v4h-4zM170 388h4v4h-4zM78 392h4v4h-4zM130 392h4v4h-4zM174 392h4v4h-4zM194 396h8v4h-8z"/>
<path fill="#ff8600" d="M110 156h4v4h-4zM242 156h8v4h-8zM286 156h12v4h-12zM66 160h4v4h-4zM118 160h4v4h-4zM230 160h4v4h-4zM118 164h4v4h-4zM230 164h4v4h-4zM118 168h4v4h-4zM226 168h4v4h-4zM306 168h4v4h-4zM122 172h4v4h-4zM306 172h4v4h-4zM122 176h4v4h-4zM222 176h4v4h-4zM306 176h4v4h-4zM218 180h4v4h-4zM62 184h4v4h-4zM126 184h4v4h-4zM218 184h4v4h-4zM62 188h4v4h-4zM126 188h4v4h-4zM214 188h4v4h-4zM214 192h4v4h-4zM130 196h4v4h-4zM130 200h4v4h-4zM210 200h4v4h-4zM210 204h4v4h-4zM134 208h4v4h-4zM206 208h4v4h-4zM134 212h4v4h-4zM206 212h4v4h-4zM134 216h4v4h-4zM206 216h4v4h-4zM206 220h4v4h-4zM138 224h4v4h-4zM206 224h4v4h-4zM138 228h4v4h-4zM206 228h4v4h-4zM138 232h4v4h-4zM206 232h4v4h-4zM138 236h4v4h-4zM206 236h4v4h-4zM138 240h4v4h-4zM206 240h4v4h-4zM138 244h4v4h-4zM206 244h4v4h-4zM138 248h4v4h-4zM206 248h4v4h-4zM62 252h4v4h-4zM134 252h8v4h-8zM206 252h8v4h-8zM62 256h4v4h-4zM134 256h8v4h-8zM210 256h4v4h-4zM306 256h4v4h-4zM62 260h4v4h-4zM134 260h8v4h-8zM210 260h4v4h-4zM306 260h4v4h-4zM62 264h4v4h-4zM134 264h8v4h-8zM210 264h4v4h-4zM306 264h4v4h-4zM134 268h8v4h-8zM206 268h8v4h-8zM306 268h4v4h-4zM134 272h8v4h-8zM202 272h8v4h-8zM306 272h4v4h-4zM134 276h8v4h-8zM198 276h8v4h-8zM306 276h4v4h-4zM134 280h12v4h-12zM190 280h12v4h-12zM306 280h4v4h-4zM134 284h28v4h-28zM170 284h20v4h-20zM306 284h4v4h-4zM138 288h36v4h-36zM162 336h28v4h-28zM210 336h32v4h-32zM158 340h56v4h-56zM246 340h4v4h-4zM158 344h44v4h-44zM250 344h4v4h-4zM158 348h20v4h-20zM158 352h16v4h-16zM254 352h4v4h-4zM58 356h4v4h-4zM158 356h16v4h-16zM58 360h4v4h-4zM162 360h32v4h-32zM258 360h4v4h-4zM58 364h4v4h-4zM162 364h40v4h-40zM58 368h4v4h-4zM162 368h16v4h-16zM202 368h4v4h-4zM262 368h4v4h-4zM306 368h4v4h-4zM206 372h4v4h-4zM210 376h4v4h-4zM266 376h4v4h-4zM270 380h4v4h-4zM154 384h8v4h-8zM274 384h4v4h-4zM298 384h8v4h-8zM62 388h4v4h-4zM146 388h8v4h-8zM162 388h8v4h-8zM286 388h8v4h-8zM74 392h4v4h-4zM134 392h4v4h-4zM210 392h4v4h-4zM186 396h8v4h-8zM202 396h4v4h-4z"/>
<path fill="#ff7100" d="M74 160h8v4h-8zM94 160h8v4h-8zM102 164h4v4h-4zM254 164h24v4h-24zM70 168h4v4h-4zM250 168h4v4h-4zM278 168h8v4h-8zM106 172h4v4h-4zM242 172h4v4h-4zM286 172h4v4h-4zM110 176h4v4h-4zM238 176h4v4h-4zM290 176h4v4h-4zM110 180h4v4h-4zM234 180h4v4h-4zM294 180h4v4h-4zM114 184h4v4h-4zM298 184h4v4h-4zM66 188h4v4h-4zM114 188h4v4h-4zM230 188h4v4h-4zM298 188h4v4h-4zM302 192h4v4h-4zM118 196h4v4h-4zM226 196h4v4h-4zM302 196h4v4h-4zM118 200h4v4h-4zM302 200h4v4h-4zM222 204h4v4h-4zM222 208h4v4h-4zM122 212h4v4h-4zM122 216h4v4h-4zM122 220h4v4h-4zM122 224h4v4h-4zM122 228h4v4h-4zM122 232h4v4h-4zM302 232h4v4h-4zM122 236h4v4h-4zM222 236h4v4h-4zM302 236h4v4h-4zM122 240h4v4h-4zM222 240h4v4h-4zM302 240h4v4h-4zM298 244h4v4h-4zM226 248h4v4h-4zM298 248h4v4h-4zM66 252h4v4h-4zM118 252h4v4h-4zM226 252h4v4h-4zM294 252h4v4h-4zM66 256h4v4h-4zM118 256h4v4h-4zM230 256h4v4h-4zM290 256h4v4h-4zM66 260h4v4h-4zM234 260h4v4h-4zM286 260h8v4h-8zM66 264h4v4h-4zM114 264h4v4h-4zM234 264h8v4h-8zM282 264h8v4h-8zM114 268h4v4h-4zM238 268h8v4h-8zM278 268h8v4h-8zM114 272h4v4h-4zM238 272h12v4h-12zM274 272h8v4h-8zM238 276h12v4h-12zM270 276h12v4h-12zM110 280h4v4h-4zM234 280h16v4h-16zM270 280h12v4h-12zM110 284h4v4h-4zM230 284h12v4h-12zM274 284h12v4h-12zM110 288h4v4h-4zM218 288h12v4h-12zM282 288h8v4h-8zM110 292h4v4h-4zM210 292h8v4h-8zM286 292h8v4h-8zM202 296h8v4h-8zM294 296h8v4h-8zM106 300h4v4h-4zM194 300h8v4h-8zM298 300h8v4h-8zM106 304h4v4h-4zM190 304h8v4h-8zM302 304h4v4h-4zM66 308h4v4h-4zM102 308h4v4h-4zM190 308h8v4h-8zM302 308h4v4h-4zM70 312h4v4h-4zM98 312h8v4h-8zM190 312h12v4h-12zM74 316h4v4h-4zM94 316h8v4h-8zM198 316h12v4h-12zM78 320h24v4h-24zM210 320h28v4h-28zM86 324h20v4h-20zM242 324h12v4h-12zM86 328h28v4h-28zM254 328h4v4h-4zM82 332h8v4h-8zM118 332h8v4h-8zM78 336h8v4h-8zM126 336h4v4h-4zM258 336h4v4h-4zM78 340h4v4h-4zM130 340h4v4h-4zM258 340h4v4h-4zM74 344h4v4h-4zM134 344h4v4h-4zM70 352h4v4h-4zM138 352h4v4h-4zM262 352h4v4h-4zM138 356h4v4h-4zM266 360h4v4h-4zM302 364h4v4h-4zM270 368h4v4h-4zM298 368h4v4h-4zM70 372h4v4h-4zM138 372h4v4h-4zM278 372h4v4h-4zM294 372h4v4h-4zM70 376h4v4h-4zM138 376h4v4h-4zM190 376h12v4h-12zM74 380h4v4h-4zM134 380h4v4h-4zM182 380h4v4h-4zM78 384h4v4h-4zM130 384h4v4h-4zM206 384h4v4h-4zM182 388h4v4h-4zM206 388h4v4h-4zM186 392h4v4h-4zM202 392h4v4h-4z"/>
<path fill="#ff6d00" d="M82 160h12v4h-12zM74 164h8v4h-8zM94 164h8v4h-8zM102 168h4v4h-4zM254 168h24v4h-24zM70 172h4v4h-4zM102 172h4v4h-4zM246 172h8v4h-8zM278 172h8v4h-8zM106 176h4v4h-4zM242 176h4v4h-4zM286 176h4v4h-4zM238 180h4v4h-4zM290 180h4v4h-4zM110 184h4v4h-4zM234 184h4v4h-4zM294 184h4v4h-4zM294 188h4v4h-4zM66 192h4v4h-4zM114 192h4v4h-4zM230 192h4v4h-4zM298 192h4v4h-4zM66 196h4v4h-4zM298 196h4v4h-4zM226 200h4v4h-4zM118 204h4v4h-4zM302 204h4v4h-4zM118 208h4v4h-4zM302 208h4v4h-4zM222 212h4v4h-4zM302 212h4v4h-4zM222 216h4v4h-4zM302 216h4v4h-4zM222 220h4v4h-4zM302 220h4v4h-4zM222 224h4v4h-4zM302 224h4v4h-4zM222 228h4v4h-4zM302 228h4v4h-4zM222 232h4v4h-4zM298 236h4v4h-4zM66 240h4v4h-4zM118 240h4v4h-4zM226 240h4v4h-4zM298 240h4v4h-4zM66 244h4v4h-4zM118 244h4v4h-4zM226 244h4v4h-4zM294 244h4v4h-4zM66 248h4v4h-4zM118 248h4v4h-4zM230 248h4v4h-4zM294 248h4v4h-4zM230 252h4v4h-4zM290 252h4v4h-4zM114 256h4v4h-4zM234 256h4v4h-4zM286 256h4v4h-4zM114 260h4v4h-4zM238 260h4v4h-4zM282 260h4v4h-4zM242 264h8v4h-8zM274 264h8v4h-8zM66 268h4v4h-4zM110 268h4v4h-4zM246 268h32v4h-32zM66 272h4v4h-4zM110 272h4v4h-4zM250 272h24v4h-24zM110 276h4v4h-4zM250 276h20v4h-20zM250 280h20v4h-20zM242 284h32v4h-32zM230 288h16v4h-16zM266 288h16v4h-16zM106 292h4v4h-4zM218 292h16v4h-16zM274 292h12v4h-12zM106 296h4v4h-4zM210 296h12v4h-12zM282 296h12v4h-12zM202 300h12v4h-12zM290 300h8v4h-8zM66 304h4v4h-4zM102 304h4v4h-4zM198 304h12v4h-12zM294 304h8v4h-8zM70 308h4v4h-4zM98 308h4v4h-4zM198 308h12v4h-12zM298 308h4v4h-4zM74 312h4v4h-4zM94 312h4v4h-4zM202 312h12v4h-12zM298 312h8v4h-8zM78 316h16v4h-16zM210 316h20v4h-20zM302 316h4v4h-4zM238 320h16v4h-16zM302 320h4v4h-4zM254 324h4v4h-4zM302 324h4v4h-4zM258 328h4v4h-4zM90 332h28v4h-28zM258 332h4v4h-4zM86 336h4v4h-4zM122 336h4v4h-4zM82 340h4v4h-4zM126 340h4v4h-4zM78 344h4v4h-4zM130 344h4v4h-4zM262 344h4v4h-4zM74 348h4v4h-4zM134 348h4v4h-4zM262 348h4v4h-4zM134 352h4v4h-4zM70 356h4v4h-4zM70 360h4v4h-4zM138 360h4v4h-4zM302 360h4v4h-4zM70 364h4v4h-4zM138 364h4v4h-4zM270 364h4v4h-4zM70 368h4v4h-4zM138 368h4v4h-4zM274 368h4v4h-4zM282 372h12v4h-12zM74 376h4v4h-4zM134 376h4v4h-4zM186 380h4v4h-4zM202 380h4v4h-4zM182 384h4v4h-4zM86 388h8v4h-8zM118 388h8v4h-8zM190 392h12v4h-12z"/>
<path fill="#ff7500" d="M102 160h4v4h-4zM254 160h24v4h-24zM70 164h4v4h-4zM106 164h4v4h-4zM246 164h8v4h-8zM278 164h8v4h-8zM106 168h4v4h-4zM242 168h8v4h-8zM286 168h8v4h-8zM110 172h4v4h-4zM238 172h4v4h-4zM290 172h8v4h-8zM234 176h4v4h-4zM294 176h4v4h-4zM114 180h4v4h-4zM298 180h4v4h-4zM66 184h4v4h-4zM230 184h4v4h-4zM302 184h4v4h-4zM118 188h4v4h-4zM226 188h4v4h-4zM302 188h4v4h-4zM118 192h4v4h-4zM226 192h4v4h-4zM222 196h4v4h-4zM222 200h4v4h-4zM122 204h4v4h-4zM122 208h4v4h-4zM218 208h4v4h-4zM218 212h4v4h-4zM218 216h4v4h-4zM218 220h4v4h-4zM218 224h4v4h-4zM126 228h4v4h-4zM218 228h4v4h-4zM218 232h4v4h-4zM218 236h4v4h-4zM218 240h4v4h-4zM122 244h4v4h-4zM222 244h4v4h-4zM302 244h4v4h-4zM122 248h4v4h-4zM222 248h4v4h-4zM302 248h4v4h-4zM122 252h4v4h-4zM298 252h4v4h-4zM122 256h4v4h-4zM226 256h4v4h-4zM294 256h8v4h-8zM118 260h4v4h-4zM230 260h4v4h-4zM294 260h4v4h-4zM118 264h4v4h-4zM230 264h4v4h-4zM290 264h4v4h-4zM118 268h4v4h-4zM230 268h8v4h-8zM286 268h8v4h-8zM230 272h8v4h-8zM282 272h8v4h-8zM114 276h4v4h-4zM230 276h8v4h-8zM282 276h8v4h-8zM114 280h4v4h-4zM226 280h8v4h-8zM282 280h12v4h-12zM114 284h4v4h-4zM218 284h12v4h-12zM286 284h8v4h-8zM114 288h4v4h-4zM210 288h8v4h-8zM290 288h8v4h-8zM202 292h8v4h-8zM294 292h12v4h-12zM110 296h4v4h-4zM190 296h12v4h-12zM302 296h4v4h-4zM110 300h4v4h-4zM182 300h12v4h-12zM110 304h4v4h-4zM178 304h12v4h-12zM106 308h4v4h-4zM178 308h12v4h-12zM66 312h4v4h-4zM106 312h4v4h-4zM178 312h12v4h-12zM70 316h4v4h-4zM102 316h8v4h-8zM182 316h16v4h-16zM74 320h4v4h-4zM102 320h8v4h-8zM194 320h16v4h-16zM78 324h8v4h-8zM106 324h12v4h-12zM210 324h32v4h-32zM78 328h8v4h-8zM114 328h12v4h-12zM246 328h8v4h-8zM78 332h4v4h-4zM126 332h4v4h-4zM254 332h4v4h-4zM74 336h4v4h-4zM130 336h4v4h-4zM254 336h4v4h-4zM306 336h4v4h-4zM74 340h4v4h-4zM134 340h4v4h-4zM306 340h4v4h-4zM70 344h4v4h-4zM138 344h4v4h-4zM258 344h4v4h-4zM306 344h4v4h-4zM70 348h4v4h-4zM138 348h4v4h-4zM306 348h4v4h-4zM66 352h4v4h-4zM142 352h4v4h-4zM66 356h4v4h-4zM142 356h4v4h-4zM262 356h4v4h-4zM66 360h4v4h-4zM142 360h4v4h-4zM66 364h4v4h-4zM142 364h4v4h-4zM266 364h4v4h-4zM66 368h4v4h-4zM142 368h4v4h-4zM302 368h4v4h-4zM66 372h4v4h-4zM142 372h4v4h-4zM274 372h4v4h-4zM298 372h4v4h-4zM66 376h4v4h-4zM142 376h4v4h-4zM182 376h8v4h-8zM202 376h4v4h-4zM278 376h20v4h-20zM70 380h4v4h-4zM138 380h4v4h-4zM178 380h4v4h-4zM206 380h4v4h-4zM74 384h4v4h-4zM134 384h4v4h-4zM178 384h4v4h-4zM82 388h4v4h-4zM126 388h4v4h-4zM178 388h4v4h-4zM94 392h24v4h-24z"/>
<path fill="#ff6900" d="M82 164h12v4h-12zM74 168h8v4h-8zM94 168h8v4h-8zM254 172h24v4h-24zM70 176h4v4h-4zM102 176h4v4h-4zM246 176h8v4h-8zM278 176h8v4h-8zM70 180h4v4h-4zM106 180h4v4h-4zM242 180h4v4h-4zM286 180h4v4h-4zM238 184h4v4h-4zM290 184h4v4h-4zM110 188h4v4h-4zM234 188h4v4h-4zM290 188h4v4h-4zM294 192h4v4h-4zM114 196h4v4h-4zM230 196h4v4h-4zM294 196h4v4h-4zM66 200h4v4h-4zM114 200h4v4h-4zM298 200h4v4h-4zM66 204h4v4h-4zM226 204h4v4h-4zM298 204h4v4h-4zM66 208h4v4h-4zM226 208h4v4h-4zM298 208h4v4h-4zM118 212h4v4h-4zM226 212h4v4h-4zM298 212h4v4h-4zM118 216h4v4h-4zM298 216h4v4h-4zM118 220h4v4h-4zM298 220h4v4h-4zM118 224h4v4h-4zM298 224h4v4h-4zM118 228h4v4h-4zM226 228h4v4h-4zM298 228h4v4h-4zM66 232h4v4h-4zM118 232h4v4h-4zM226 232h4v4h-4zM298 232h4v4h-4zM66 236h4v4h-4zM118 236h4v4h-4zM226 236h4v4h-4zM294 236h4v4h-4zM294 240h4v4h-4zM230 244h4v4h-4zM290 244h4v4h-4zM114 248h4v4h-4zM234 248h4v4h-4zM290 248h4v4h-4zM114 252h4v4h-4zM234 252h4v4h-4zM286 252h4v4h-4zM238 256h8v4h-8zM282 256h4v4h-4zM110 260h4v4h-4zM242 260h8v4h-8zM274 260h8v4h-8zM110 264h4v4h-4zM250 264h24v4h-24zM66 276h4v4h-4zM106 276h4v4h-4zM106 280h4v4h-4zM106 284h4v4h-4zM106 288h4v4h-4zM246 288h20v4h-20zM234 292h40v4h-40zM222 296h16v4h-16zM270 296h12v4h-12zM66 300h4v4h-4zM102 300h4v4h-4zM214 300h12v4h-12zM278 300h12v4h-12zM98 304h4v4h-4zM210 304h12v4h-12zM286 304h8v4h-8zM210 308h12v4h-12zM290 308h8v4h-8zM78 312h4v4h-4zM90 312h4v4h-4zM214 312h20v4h-20zM294 312h4v4h-4zM230 316h24v4h-24zM298 316h4v4h-4zM254 320h8v4h-8zM298 320h4v4h-4zM258 324h4v4h-4zM298 324h4v4h-4zM262 328h4v4h-4zM302 328h4v4h-4zM262 332h4v4h-4zM302 332h4v4h-4zM90 336h8v4h-8zM114 336h8v4h-8zM262 336h4v4h-4zM302 336h4v4h-4zM86 340h4v4h-4zM122 340h4v4h-4zM262 340h4v4h-4zM126 344h4v4h-4zM78 348h4v4h-4zM130 348h4v4h-4zM74 352h4v4h-4zM302 352h4v4h-4zM74 356h4v4h-4zM134 356h4v4h-4zM266 356h4v4h-4zM302 356h4v4h-4zM134 360h4v4h-4zM298 364h4v4h-4zM74 368h4v4h-4zM134 368h4v4h-4zM278 368h4v4h-4zM290 368h8v4h-8zM74 372h4v4h-4zM134 372h4v4h-4zM78 380h4v4h-4zM130 380h4v4h-4zM190 380h12v4h-12zM82 384h4v4h-4zM126 384h4v4h-4zM186 384h4v4h-4zM202 384h4v4h-4zM94 388h4v4h-4zM114 388h4v4h-4zM186 388h4v4h-4zM202 388h4v4h-4z"/>
<path fill="#ff6500" d="M82 168h12v4h-12zM74 172h8v4h-8zM94 172h8v4h-8zM254 176h24v4h-24zM102 180h4v4h-4zM246 180h4v4h-4zM278 180h8v4h-8zM70 184h4v4h-4zM106 184h4v4h-4zM242 184h4v4h-4zM282 184h8v4h-8zM238 188h4v4h-4zM286 188h4v4h-4zM110 192h4v4h-4zM234 192h4v4h-4zM290 192h4v4h-4zM234 196h4v4h-4zM230 200h4v4h-4zM294 200h4v4h-4zM114 204h4v4h-4zM230 204h4v4h-4zM294 204h4v4h-4zM114 208h4v4h-4zM66 212h4v4h-4zM66 216h4v4h-4zM226 216h4v4h-4zM66 220h4v4h-4zM226 220h4v4h-4zM66 224h4v4h-4zM226 224h4v4h-4zM66 228h4v4h-4zM294 228h4v4h-4zM294 232h4v4h-4zM230 236h4v4h-4zM114 240h4v4h-4zM230 240h4v4h-4zM290 240h4v4h-4zM114 244h4v4h-4zM234 244h4v4h-4zM238 248h4v4h-4zM286 248h4v4h-4zM110 252h4v4h-4zM238 252h8v4h-8zM282 252h4v4h-4zM110 256h4v4h-4zM246 256h4v4h-4zM274 256h8v4h-8zM250 260h24v4h-24zM106 264h4v4h-4zM106 268h4v4h-4zM106 272h4v4h-4zM66 280h4v4h-4zM66 284h4v4h-4zM66 288h4v4h-4zM66 292h4v4h-4zM102 292h4v4h-4zM66 296h4v4h-4zM102 296h4v4h-4zM238 296h32v4h-32zM226 300h52v4h-52zM70 304h4v4h-4zM222 304h20v4h-20zM270 304h16v4h-16zM74 308h4v4h-4zM94 308h4v4h-4zM222 308h28v4h-28zM282 308h8v4h-8zM82 312h8v4h-8zM234 312h28v4h-28zM286 312h8v4h-8zM254 316h12v4h-12zM290 316h8v4h-8zM262 320h4v4h-4zM294 320h4v4h-4zM262 324h4v4h-4zM298 328h4v4h-4zM98 336h16v4h-16zM90 340h4v4h-4zM118 340h4v4h-4zM302 340h4v4h-4zM82 344h4v4h-4zM302 344h4v4h-4zM266 348h4v4h-4zM302 348h4v4h-4zM78 352h4v4h-4zM130 352h4v4h-4zM266 352h4v4h-4zM74 360h4v4h-4zM270 360h4v4h-4zM298 360h4v4h-4zM74 364h4v4h-4zM134 364h4v4h-4zM274 364h4v4h-4zM294 364h4v4h-4zM282 368h8v4h-8zM78 376h4v4h-4zM130 376h4v4h-4zM82 380h4v4h-4zM126 380h4v4h-4zM86 384h4v4h-4zM122 384h4v4h-4zM190 384h12v4h-12zM98 388h16v4h-16zM190 388h12v4h-12z"/>
<path fill="#ff6100" d="M82 172h12v4h-12zM74 176h8v4h-8zM94 176h8v4h-8zM250 180h8v4h-8zM270 180h8v4h-8zM102 184h4v4h-4zM246 184h4v4h-4zM278 184h4v4h-4zM70 188h4v4h-4zM106 188h4v4h-4zM242 188h4v4h-4zM282 188h4v4h-4zM238 192h4v4h-4zM286 192h4v4h-4zM110 196h4v4h-4zM290 196h4v4h-4zM110 200h4v4h-4zM234 200h4v4h-4zM290 200h4v4h-4zM230 208h4v4h-4zM294 208h4v4h-4zM114 212h4v4h-4zM230 212h4v4h-4zM294 212h4v4h-4zM114 216h4v4h-4zM230 216h4v4h-4zM294 216h4v4h-4zM114 220h4v4h-4zM230 220h4v4h-4zM294 220h4v4h-4zM114 224h4v4h-4zM230 224h4v4h-4zM294 224h4v4h-4zM114 228h4v4h-4zM230 228h4v4h-4zM114 232h4v4h-4zM230 232h4v4h-4zM290 232h4v4h-4zM114 236h4v4h-4zM290 236h4v4h-4zM234 240h4v4h-4zM286 240h4v4h-4zM110 244h4v4h-4zM238 244h4v4h-4zM286 244h4v4h-4zM110 248h4v4h-4zM242 248h4v4h-4zM282 248h4v4h-4zM246 252h4v4h-4zM274 252h8v4h-8zM70 256h4v4h-4zM106 256h4v4h-4zM250 256h24v4h-24zM70 260h4v4h-4zM106 260h4v4h-4zM102 272h4v4h-4zM102 276h4v4h-4zM102 280h4v4h-4zM102 284h4v4h-4zM102 288h4v4h-4zM70 300h4v4h-4zM98 300h4v4h-4zM74 304h4v4h-4zM94 304h4v4h-4zM242 304h28v4h-28zM78 308h16v4h-16zM250 308h32v4h-32zM262 312h24v4h-24zM266 316h24v4h-24zM266 320h8v4h-8zM286 320h8v4h-8zM266 324h8v4h-8zM294 324h4v4h-4zM266 328h4v4h-4zM294 328h4v4h-4zM266 332h4v4h-4zM298 332h4v4h-4zM266 336h4v4h-4zM298 336h4v4h-4zM94 340h4v4h-4zM110 340h8v4h-8zM266 340h4v4h-4zM86 344h4v4h-4zM122 344h4v4h-4zM266 344h4v4h-4zM82 348h4v4h-4zM126 348h4v4h-4zM78 356h4v4h-4zM130 356h4v4h-4zM270 356h4v4h-4zM298 356h4v4h-4zM78 360h4v4h-4zM130 360h4v4h-4zM294 360h4v4h-4zM78 364h4v4h-4zM130 364h4v4h-4zM278 364h4v4h-4zM290 364h4v4h-4zM78 368h4v4h-4zM130 368h4v4h-4zM78 372h4v4h-4zM130 372h4v4h-4zM90 384h4v4h-4zM118 384h4v4h-4z"/>
<path fill="#ff5d00" d="M82 176h12v4h-12zM74 180h8v4h-8zM98 180h4v4h-4zM258 180h12v4h-12zM250 184h4v4h-4zM274 184h4v4h-4zM102 188h4v4h-4zM246 188h4v4h-4zM278 188h4v4h-4zM70 192h4v4h-4zM106 192h4v4h-4zM242 192h4v4h-4zM282 192h4v4h-4zM238 196h4v4h-4zM286 196h4v4h-4zM110 204h4v4h-4zM234 204h4v4h-4zM290 204h4v4h-4zM110 208h4v4h-4zM234 208h4v4h-4zM290 208h4v4h-4zM290 212h4v4h-4zM290 216h4v4h-4zM290 220h4v4h-4zM290 224h4v4h-4zM290 228h4v4h-4zM234 232h4v4h-4zM110 236h4v4h-4zM234 236h4v4h-4zM286 236h4v4h-4zM110 240h4v4h-4zM238 240h4v4h-4zM282 240h4v4h-4zM70 244h4v4h-4zM242 244h4v4h-4zM282 244h4v4h-4zM70 248h4v4h-4zM246 248h4v4h-4zM274 248h8v4h-8zM70 252h4v4h-4zM106 252h4v4h-4zM250 252h24v4h-24zM102 260h4v4h-4zM70 264h4v4h-4zM102 264h4v4h-4zM70 268h4v4h-4zM102 268h4v4h-4zM98 292h4v4h-4zM70 296h4v4h-4zM98 296h4v4h-4zM94 300h4v4h-4zM90 304h4v4h-4zM274 320h12v4h-12zM274 324h20v4h-20zM270 328h4v4h-4zM290 328h4v4h-4zM270 332h4v4h-4zM294 332h4v4h-4zM270 336h4v4h-4zM98 340h12v4h-12zM298 340h4v4h-4zM90 344h4v4h-4zM118 344h4v4h-4zM298 344h4v4h-4zM86 348h4v4h-4zM122 348h4v4h-4zM298 348h4v4h-4zM82 352h4v4h-4zM126 352h4v4h-4zM270 352h4v4h-4zM298 352h4v4h-4zM274 360h4v4h-4zM282 364h8v4h-8zM126 372h4v4h-4zM82 376h4v4h-4zM126 376h4v4h-4zM86 380h4v4h-4zM122 380h4v4h-4zM94 384h8v4h-8zM110 384h8v4h-8z"/>
<path fill="#ff5900" d="M82 180h16v4h-16zM74 184h8v4h-8zM98 184h4v4h-4zM254 184h20v4h-20zM74 188h4v4h-4zM250 188h4v4h-4zM274 188h4v4h-4zM102 192h4v4h-4zM246 192h4v4h-4zM278 192h4v4h-4zM70 196h4v4h-4zM106 196h4v4h-4zM242 196h4v4h-4zM282 196h4v4h-4zM70 200h4v4h-4zM106 200h4v4h-4zM238 200h4v4h-4zM286 200h4v4h-4zM238 204h4v4h-4zM286 204h4v4h-4zM110 212h4v4h-4zM234 212h4v4h-4zM110 216h4v4h-4zM234 216h4v4h-4zM110 220h4v4h-4zM234 220h4v4h-4zM110 224h4v4h-4zM234 224h4v4h-4zM110 228h4v4h-4zM234 228h4v4h-4zM286 228h4v4h-4zM110 232h4v4h-4zM286 232h4v4h-4zM70 236h4v4h-4zM238 236h4v4h-4zM282 236h4v4h-4zM70 240h4v4h-4zM242 240h4v4h-4zM106 244h4v4h-4zM246 244h4v4h-4zM274 244h8v4h-8zM106 248h4v4h-4zM250 248h8v4h-8zM266 248h8v4h-8zM102 252h4v4h-4zM102 256h4v4h-4zM98 264h4v4h-4zM98 268h4v4h-4zM70 272h4v4h-4zM98 272h4v4h-4zM70 276h4v4h-4zM98 276h4v4h-4zM98 280h4v4h-4zM98 284h4v4h-4zM98 288h4v4h-4zM70 292h4v4h-4zM74 300h4v4h-4zM78 304h12v4h-12zM274 328h16v4h-16zM274 332h4v4h-4zM290 332h4v4h-4zM294 336h4v4h-4zM270 340h4v4h-4zM294 340h4v4h-4zM94 344h8v4h-8zM110 344h8v4h-8zM270 344h4v4h-4zM90 348h4v4h-4zM118 348h4v4h-4zM270 348h4v4h-4zM86 352h4v4h-4zM122 352h4v4h-4zM294 352h4v4h-4zM82 356h4v4h-4zM126 356h4v4h-4zM274 356h4v4h-4zM294 356h4v4h-4zM82 360h4v4h-4zM126 360h4v4h-4zM278 360h16v4h-16zM82 364h4v4h-4zM126 364h4v4h-4zM82 368h4v4h-4zM126 368h4v4h-4zM82 372h4v4h-4zM86 376h4v4h-4zM122 376h4v4h-4zM90 380h4v4h-4zM118 380h4v4h-4zM102 384h8v4h-8z"/>
<path fill="#ff5500" d="M82 184h16v4h-16zM78 188h4v4h-4zM98 188h4v4h-4zM254 188h20v4h-20zM74 192h4v4h-4zM250 192h4v4h-4zM274 192h4v4h-4zM102 196h4v4h-4zM246 196h4v4h-4zM278 196h4v4h-4zM242 200h4v4h-4zM282 200h4v4h-4zM70 204h4v4h-4zM106 204h4v4h-4zM282 204h4v4h-4zM70 208h4v4h-4zM106 208h4v4h-4zM238 208h4v4h-4zM286 208h4v4h-4zM70 212h4v4h-4zM238 212h4v4h-4zM286 212h4v4h-4zM286 216h4v4h-4zM286 220h4v4h-4zM70 224h4v4h-4zM238 224h4v4h-4zM286 224h4v4h-4zM70 228h4v4h-4zM238 228h4v4h-4zM70 232h4v4h-4zM238 232h4v4h-4zM282 232h4v4h-4zM106 236h4v4h-4zM242 236h4v4h-4zM278 236h4v4h-4zM106 240h4v4h-4zM246 240h4v4h-4zM274 240h8v4h-8zM250 244h4v4h-4zM270 244h4v4h-4zM74 248h4v4h-4zM102 248h4v4h-4zM258 248h8v4h-8zM74 252h4v4h-4zM74 256h4v4h-4zM98 256h4v4h-4zM74 260h4v4h-4zM98 260h4v4h-4zM74 264h4v4h-4zM74 268h4v4h-4zM70 280h4v4h-4zM70 284h4v4h-4zM70 288h4v4h-4zM94 292h4v4h-4zM74 296h4v4h-4zM94 296h4v4h-4zM78 300h4v4h-4zM90 300h4v4h-4zM278 332h12v4h-12zM274 336h4v4h-4zM290 336h4v4h-4zM274 340h4v4h-4zM102 344h8v4h-8zM294 344h4v4h-4zM94 348h4v4h-4zM114 348h4v4h-4zM274 348h4v4h-4zM294 348h4v4h-4zM274 352h4v4h-4zM86 356h4v4h-4zM122 356h4v4h-4zM278 356h4v4h-4zM290 356h4v4h-4zM86 372h4v4h-4zM122 372h4v4h-4zM94 380h4v4h-4zM114 380h4v4h-4z"/>
<path fill="#ff5100" d="M82 188h16v4h-16zM78 192h4v4h-4zM98 192h4v4h-4zM254 192h8v4h-8zM266 192h8v4h-8zM74 196h4v4h-4zM250 196h4v4h-4zM274 196h4v4h-4zM102 200h4v4h-4zM246 200h4v4h-4zM278 200h4v4h-4zM242 204h4v4h-4zM242 208h4v4h-4zM282 208h4v4h-4zM106 212h4v4h-4zM282 212h4v4h-4zM70 216h4v4h-4zM106 216h4v4h-4zM238 216h4v4h-4zM282 216h4v4h-4zM70 220h4v4h-4zM106 220h4v4h-4zM238 220h4v4h-4zM282 220h4v4h-4zM106 224h4v4h-4zM282 224h4v4h-4zM106 228h4v4h-4zM242 228h4v4h-4zM282 228h4v4h-4zM106 232h4v4h-4zM242 232h4v4h-4zM278 232h4v4h-4zM246 236h4v4h-4zM274 236h4v4h-4zM102 240h4v4h-4zM250 240h4v4h-4zM270 240h4v4h-4zM74 244h4v4h-4zM102 244h4v4h-4zM254 244h16v4h-16zM98 248h4v4h-4zM78 252h4v4h-4zM98 252h4v4h-4zM78 256h4v4h-4zM94 256h4v4h-4zM78 260h4v4h-4zM90 260h8v4h-8zM78 264h4v4h-4zM90 264h8v4h-8zM94 268h4v4h-4zM74 272h4v4h-4zM94 272h4v4h-4zM74 276h4v4h-4zM94 276h4v4h-4zM94 280h4v4h-4zM94 284h4v4h-4zM94 288h4v4h-4zM74 292h4v4h-4zM90 296h4v4h-4zM82 300h8v4h-8zM278 336h12v4h-12zM278 340h4v4h-4zM290 340h4v4h-4zM274 344h4v4h-4zM290 344h4v4h-4zM98 348h4v4h-4zM110 348h4v4h-4zM290 348h4v4h-4zM90 352h4v4h-4zM118 352h4v4h-4zM278 352h4v4h-4zM290 352h4v4h-4zM282 356h8v4h-8zM86 360h4v4h-4zM122 360h4v4h-4zM86 364h4v4h-4zM122 364h4v4h-4zM86 368h4v4h-4zM122 368h4v4h-4zM90 376h4v4h-4zM118 376h4v4h-4zM98 380h16v4h-16z"/>
<path fill="#ff4c00" d="M82 192h4v4h-4zM90 192h8v4h-8zM262 192h4v4h-4zM78 196h4v4h-4zM98 196h4v4h-4zM254 196h8v4h-8zM266 196h8v4h-8zM74 200h4v4h-4zM250 200h4v4h-4zM274 200h4v4h-4zM74 204h4v4h-4zM102 204h4v4h-4zM246 204h4v4h-4zM278 204h4v4h-4zM102 208h4v4h-4zM278 208h4v4h-4zM242 212h4v4h-4zM278 212h4v4h-4zM242 216h4v4h-4zM242 220h4v4h-4zM242 224h4v4h-4zM278 224h4v4h-4zM278 228h4v4h-4zM102 232h4v4h-4zM246 232h4v4h-4zM274 232h4v4h-4zM74 236h4v4h-4zM102 236h4v4h-4zM250 236h4v4h-4zM270 236h4v4h-4zM74 240h4v4h-4zM254 240h16v4h-16zM78 244h4v4h-4zM98 244h4v4h-4zM78 248h8v4h-8zM94 248h4v4h-4zM82 252h16v4h-16zM82 256h12v4h-12zM82 260h8v4h-8zM82 264h8v4h-8zM78 268h16v4h-16zM78 272h4v4h-4zM90 272h4v4h-4zM74 280h4v4h-4zM74 284h4v4h-4zM74 288h4v4h-4zM90 292h4v4h-4zM78 296h4v4h-4zM86 296h4v4h-4zM282 340h8v4h-8zM278 344h12v4h-12zM102 348h8v4h-8zM278 348h12v4h-12zM94 352h4v4h-4zM114 352h4v4h-4zM282 352h8v4h-8zM90 356h4v4h-4zM118 356h4v4h-4zM90 372h4v4h-4zM118 372h4v4h-4zM94 376h4v4h-4zM114 376h4v4h-4z"/>
<path fill="#ff4800" d="M86 192h4v4h-4zM82 196h16v4h-16zM262 196h4v4h-4zM78 200h4v4h-4zM98 200h4v4h-4zM254 200h8v4h-8zM266 200h8v4h-8zM98 204h4v4h-4zM250 204h4v4h-4zM274 204h4v4h-4zM74 208h4v4h-4zM246 208h4v4h-4zM274 208h4v4h-4zM74 212h4v4h-4zM102 212h4v4h-4zM246 212h4v4h-4zM74 216h4v4h-4zM102 216h4v4h-4zM246 216h4v4h-4zM278 216h4v4h-4zM74 220h4v4h-4zM102 220h4v4h-4zM246 220h4v4h-4zM278 220h4v4h-4zM74 224h4v4h-4zM102 224h4v4h-4zM246 224h4v4h-4zM274 224h4v4h-4zM74 228h4v4h-4zM102 228h4v4h-4zM246 228h4v4h-4zM274 228h4v4h-4zM74 232h4v4h-4zM250 232h8v4h-8zM270 232h4v4h-4zM78 236h4v4h-4zM98 236h4v4h-4zM254 236h16v4h-16zM78 240h4v4h-4zM98 240h4v4h-4zM82 244h16v4h-16zM86 248h8v4h-8zM82 272h8v4h-8zM78 276h4v4h-4zM86 276h8v4h-8zM78 280h4v4h-4zM90 280h4v4h-4zM90 284h4v4h-4zM90 288h4v4h-4zM78 292h4v4h-4zM86 292h4v4h-4zM82 296h4v4h-4zM98 352h16v4h-16zM94 356h4v4h-4zM114 356h4v4h-4zM90 360h4v4h-4zM118 360h4v4h-4zM90 364h4v4h-4zM118 364h4v4h-4zM90 368h4v4h-4zM118 368h4v4h-4zM94 372h4v4h-4zM114 372h4v4h-4zM98 376h16v4h-16z"/>
<path fill="#ff4400" d="M82 200h16v4h-16zM262 200h4v4h-4zM78 204h4v4h-4zM94 204h4v4h-4zM254 204h20v4h-20zM78 208h4v4h-4zM98 208h4v4h-4zM250 208h8v4h-8zM270 208h4v4h-4zM98 212h4v4h-4zM250 212h4v4h-4zM270 212h8v4h-8zM98 216h4v4h-4zM250 216h4v4h-4zM274 216h4v4h-4zM250 220h4v4h-4zM274 220h4v4h-4zM98 224h4v4h-4zM250 224h4v4h-4zM270 224h4v4h-4zM78 228h4v4h-4zM98 228h4v4h-4zM250 228h8v4h-8zM266 228h8v4h-8zM78 232h4v4h-4zM98 232h4v4h-4zM258 232h12v4h-12zM82 236h4v4h-4zM94 236h4v4h-4zM82 240h16v4h-16zM82 276h4v4h-4zM82 280h8v4h-8zM78 284h12v4h-12zM78 288h12v4h-12zM82 292h4v4h-4zM98 356h4v4h-4zM110 356h4v4h-4zM94 360h4v4h-4zM114 360h4v4h-4zM94 364h4v4h-4zM114 364h4v4h-4zM94 368h4v4h-4zM114 368h4v4h-4zM98 372h16v4h-16z"/>
<path fill="#ff4000" d="M82 204h12v4h-12zM82 208h4v4h-4zM90 208h8v4h-8zM258 208h12v4h-12zM78 212h8v4h-8zM94 212h4v4h-4zM254 212h16v4h-16zM78 216h4v4h-4zM254 216h20v4h-20zM78 220h4v4h-4zM98 220h4v4h-4zM254 220h20v4h-20zM78 224h4v4h-4zM94 224h4v4h-4zM254 224h16v4h-16zM82 228h4v4h-4zM94 228h4v4h-4zM258 228h8v4h-8zM82 232h16v4h-16zM86 236h8v4h-8zM102 356h8v4h-8zM98 360h16v4h-16zM98 364h4v4h-4zM110 364h4v4h-4zM98 368h16v4h-16z"/>
<path fill="#ff3c00" d="M86 208h4v4h-4zM86 212h8v4h-8zM82 216h16v4h-16zM82 220h16v4h-16zM82 224h12v4h-12zM86 228h8v4h-8zM102 364h8v4h-8z"/>
<path fill="#b9ff46" d="M42 396h4v4h-4z"/>
<path fill="#a4ff5b" d="M38 400h4v4h-4z"/>
<path fill="#9cff63" d="M42 400h4v4h-4zM50 404h4v4h-4z"/>
<path fill="#acff53" d="M46 400h4v4h-4z"/>
<path fill="#5fffa0" d="M38 404h4v4h-4z"/>
<path fill="#57ffa8" d="M42 404h4v4h-4z"/>
<path fill="#6bff94" d="M46 404h4v4h-4z"/>
<path fill="#b5ff4a" d="M318 404h4v4h-4z"/>
<path fill="#a0ff5f" d="M322 404h4v4h-4z"/>
<path fill="#94ff6b" d="M326 404h4v4h-4z"/>
<path fill="#88ff77" d="M330 404h4v4h-4z"/>
<path fill="#8cff73" d="M334 404h4v4h-4z"/>
<path d="M93 133L94 136L96 134L98 136L100 134L102 136L104 134L105 136L105 133Z" fill="#000080"/>
</g>
<defs><linearGradient id="gs" x1="0" y1="0" x2="0" y2="1"><stop offset="0" stop-color="#e8ff30" stop-opacity="0"/><stop offset="0.45" stop-color="#d8ff30" stop-opacity="0.7"/><stop offset="0.75" stop-color="#a0ff60"/><stop offset="1" stop-color="#70ffa0"/></linearGradient></defs>
<rect x="44" y="335" width="6" height="70" fill="url(#gs)"/>
<rect x="50" y="345" width="4" height="60" fill="#f0f020" opacity="0.7"/>
<path d="M302 400L302 395.5L304.35 398.5L306.7 395.2L309.05 398.5L311.4 395.2L313.75 398.5L316.09999999999997 395.2L318.45 398.5L320.79999999999995 395.2L323.15 398.5L325.49999999999994 395.2L327.84999999999997 398.5L330.19999999999993 395.2L332.54999999999995 398.5L334.8999999999999 395.2L334 400Z" fill="#40f0e0"/>
<rect x="302" y="398" width="31" height="1.5" fill="#2060ff"/>
<rect x="302" y="399.5" width="31" height="2" fill="#0000a0"/>
</g>
<path d="M53.2 136.1L54.3 135.7L56.0 134.2L56.0 144.3M63.2 136.6L63.2 136.1L63.8 135.2L64.4 134.7L65.5 134.2L67.7 134.2L68.8 134.7L69.4 135.2L70.0 136.1L70.0 137.1L69.4 138.1L68.3 139.5L62.7 144.3L70.5 144.3M81.2 135.7L80.6 134.7L78.9 134.2L77.8 134.2L76.1 134.7L75.0 136.1L74.4 138.5L74.4 140.9L75.0 142.9L76.1 143.8L77.8 144.3L78.4 144.3L80.0 143.8L81.2 142.9L81.7 141.4L81.7 140.9L81.2 139.5L80.0 138.5L78.4 138.1L77.8 138.1L76.1 138.5L75.0 139.5L74.4 140.9M86.2 134.2L92.4 134.2L89.0 138.1L90.7 138.1L91.8 138.5L92.4 139.0L92.9 140.5L92.9 141.4L92.4 142.9L91.2 143.8L89.6 144.3L87.9 144.3L86.2 143.8L85.6 143.3L85.1 142.4M162.2 136.1L163.3 135.7L165.0 134.2L165.0 144.3M172.2 136.6L172.2 136.1L172.8 135.2L173.4 134.7L174.5 134.2L176.7 134.2L177.8 134.7L178.4 135.2L179.0 136.1L179.0 137.1L178.4 138.1L177.3 139.5L171.7 144.3L179.5 144.3M190.2 135.7L189.6 134.7L187.9 134.2L186.8 134.2L185.1 134.7L184.0 136.1L183.4 138.5L183.4 140.9L184.0 142.9L185.1 143.8L186.8 144.3L187.4 144.3L189.0 143.8L190.2 142.9L190.7 141.4L190.7 140.9L190.2 139.5L189.0 138.5L187.4 138.1L186.8 138.1L185.1 138.5L184.0 139.5L183.4 140.9M200.8 134.2L195.2 134.2L194.6 138.5L195.2 138.1L196.9 137.6L198.6 137.6L200.2 138.1L201.4 139.0L201.9 140.5L201.9 141.4L201.4 142.9L200.2 143.8L198.6 144.3L196.9 144.3L195.2 143.8L194.6 143.3L194.1 142.4M271.2 136.1L272.3 135.7L274.0 134.2L274.0 144.3M281.2 136.6L281.2 136.1L281.8 135.2L282.4 134.7L283.5 134.2L285.7 134.2L286.8 134.7L287.4 135.2L288.0 136.1L288.0 137.1L287.4 138.1L286.3 139.5L280.7 144.3L288.5 144.3M298.6 134.2L293.0 134.2L292.4 138.5L293.0 138.1L294.7 137.6L296.4 137.6L298.0 138.1L299.2 139.0L299.7 140.5L299.7 141.4L299.2 142.9L298.0 143.8L296.4 144.3L294.7 144.3L293.0 143.8L292.4 143.3L291.9 142.4M310.9 134.2L305.3 144.3M303.1 134.2L310.9 134.2M53.2 244.1L54.3 243.7L56.0 242.2L56.0 252.3M63.8 242.2L70.0 242.2L66.6 246.1L68.3 246.1L69.4 246.5L70.0 247.0L70.5 248.5L70.5 249.4L70.0 250.9L68.8 251.8L67.2 252.3L65.5 252.3L63.8 251.8L63.2 251.3L62.7 250.4M81.2 243.7L80.6 242.7L78.9 242.2L77.8 242.2L76.1 242.7L75.0 244.1L74.4 246.5L74.4 248.9L75.0 250.9L76.1 251.8L77.8 252.3L78.4 252.3L80.0 251.8L81.2 250.9L81.7 249.4L81.7 248.9L81.2 247.5L80.0 246.5L78.4 246.1L77.8 246.1L76.1 246.5L75.0 247.5L74.4 248.9M92.4 243.7L91.8 242.7L90.1 242.2L89.0 242.2L87.3 242.7L86.2 244.1L85.6 246.5L85.6 248.9L86.2 250.9L87.3 251.8L89.0 252.3L89.6 252.3L91.2 251.8L92.4 250.9L92.9 249.4L92.9 248.9L92.4 247.5L91.2 246.5L89.6 246.1L89.0 246.1L87.3 246.5L86.2 247.5L85.6 248.9M162.2 244.1L163.3 243.7L165.0 242.2L165.0 252.3M172.2 244.6L172.2 244.1L172.8 243.2L173.4 242.7L174.5 242.2L176.7 242.2L177.8 242.7L178.4 243.2L179.0 244.1L179.0 245.1L178.4 246.1L177.3 247.5L171.7 252.3L179.5 252.3M190.7 242.2L185.1 252.3M182.9 242.2L190.7 242.2M195.2 242.2L201.4 242.2L198.0 246.1L199.7 246.1L200.8 246.5L201.4 247.0L201.9 248.5L201.9 249.4L201.4 250.9L200.2 251.8L198.6 252.3L196.9 252.3L195.2 251.8L194.6 251.3L194.1 250.4M271.2 244.1L272.3 243.7L274.0 242.2L274.0 252.3M281.8 242.2L288.0 242.2L284.6 246.1L286.3 246.1L287.4 246.5L288.0 247.0L288.5 248.5L288.5 249.4L288.0 250.9L286.8 251.8L285.2 252.3L283.5 252.3L281.8 251.8L281.2 251.3L280.7 250.4M292.4 244.6L292.4 244.1L293.0 243.2L293.6 242.7L294.7 242.2L296.9 242.2L298.0 242.7L298.6 243.2L299.2 244.1L299.2 245.1L298.6 246.1L297.5 247.5L291.9 252.3L299.7 252.3M306.4 242.2L304.8 242.7L303.6 244.1L303.1 246.5L303.1 248.0L303.6 250.4L304.8 251.8L306.4 252.3L307.6 252.3L309.2 251.8L310.4 250.4L310.9 248.0L310.9 246.5L310.4 244.1L309.2 242.7L307.6 242.2L306.4 242.2M53.2 352.1L54.3 351.7L56.0 350.2L56.0 360.3M63.8 350.2L70.0 350.2L66.6 354.1L68.3 354.1L69.4 354.5L70.0 355.0L70.5 356.5L70.5 357.4L70.0 358.9L68.8 359.8L67.2 360.3L65.5 360.3L63.8 359.8L63.2 359.3L62.7 358.4M75.6 352.1L76.7 351.7L78.4 350.2L78.4 360.3M92.4 353.6L91.8 355.0L90.7 356.0L89.0 356.5L88.4 356.5L86.8 356.0L85.6 355.0L85.1 353.6L85.1 353.1L85.6 351.7L86.8 350.7L88.4 350.2L89.0 350.2L90.7 350.7L91.8 351.7L92.4 353.6L92.4 356.0L91.8 358.4L90.7 359.8L89.0 360.3L87.9 360.3L86.2 359.8L85.6 358.9M162.2 352.1L163.3 351.7L165.0 350.2L165.0 360.3M172.8 350.2L179.0 350.2L175.6 354.1L177.3 354.1L178.4 354.5L179.0 355.0L179.5 356.5L179.5 357.4L179.0 358.9L177.8 359.8L176.2 360.3L174.5 360.3L172.8 359.8L172.2 359.3L171.7 358.4M184.0 350.2L190.2 350.2L186.8 354.1L188.5 354.1L189.6 354.5L190.2 355.0L190.7 356.5L190.7 357.4L190.2 358.9L189.0 359.8L187.4 360.3L185.7 360.3L184.0 359.8L183.4 359.3L182.9 358.4M200.8 350.2L195.2 350.2L194.6 354.5L195.2 354.1L196.9 353.6L198.6 353.6L200.2 354.1L201.4 355.0L201.9 356.5L201.9 357.4L201.4 358.9L200.2 359.8L198.6 360.3L196.9 360.3L195.2 359.8L194.6 359.3L194.1 358.4M271.2 352.1L272.3 351.7L274.0 350.2L274.0 360.3M281.8 350.2L288.0 350.2L284.6 354.1L286.3 354.1L287.4 354.5L288.0 355.0L288.5 356.5L288.5 357.4L288.0 358.9L286.8 359.8L285.2 360.3L283.5 360.3L281.8 359.8L281.2 359.3L280.7 358.4M293.0 350.2L299.2 350.2L295.8 354.1L297.5 354.1L298.6 354.5L299.2 355.0L299.7 356.5L299.7 357.4L299.2 358.9L298.0 359.8L296.4 360.3L294.7 360.3L293.0 359.8L292.4 359.3L291.9 358.4M309.8 350.2L304.2 350.2L303.6 354.5L304.2 354.1L305.9 353.6L307.6 353.6L309.2 354.1L310.4 355.0L310.9 356.5L310.9 357.4L310.4 358.9L309.2 359.8L307.6 360.3L305.9 360.3L304.2 359.8L303.6 359.3L303.1 358.4" fill="none" stroke="#000" stroke-width="1.6" stroke-linejoin="round" stroke-linecap="round"/>
<path d="M66 159.6H90M78 148V171M175 159.6H199M187 148V171M284 159.6H308M296 148V171M66 267.6H90M78 256V279M175 267.6H199M187 256V279M284 267.6H308M296 256V279M66 375.6H90M78 364V387M175 375.6H199M187 364V387M284 375.6H308M296 364V387" stroke="#000" stroke-width="1.4"/>
</svg>
<!-- v scrollbar -->
<div class="a" style="left:555px;top:107px;width:11px;height:325px;background:#f0f0f0"></div>
<div class="a" style="left:555px;top:119px;width:11px;height:47px;background:#cdcdcd"></div>
<svg class="a" style="left:555px;top:107px" width="11" height="12"><path d="M2.5 7.5L5.5 4.5L8.5 7.5" fill="none" stroke="#606060" stroke-width="1.2"/></svg>
<svg class="a" style="left:555px;top:420px" width="11" height="12"><path d="M2.5 4L5.5 7L8.5 4" fill="none" stroke="#606060" stroke-width="1.2"/></svg>
<!-- h scrollbar -->
<div class="a" style="left:16px;top:432px;width:550px;height:11px;background:#f0f0f0"></div>
<div class="a" style="left:28px;top:432px;width:99px;height:11px;background:#cdcdcd"></div>
<svg class="a" style="left:16px;top:432px" width="12" height="11"><path d="M7 2.5L4 5.5L7 8.5" fill="none" stroke="#606060" stroke-width="1.2"/></svg>
<svg class="a" style="left:543px;top:432px" width="12" height="11"><path d="M4 2.5L7 5.5L4 8.5" fill="none" stroke="#606060" stroke-width="1.2"/></svg>

<!-- colorbar -->
<div class="a" style="left:566px;top:106px;width:14px;height:339px;border:1px solid #000;background:linear-gradient(to bottom,#800000 0%,#ff0000 12.5%,#ff8000 25%,#ffff00 37.5%,#80ff80 50%,#00ffff 62.5%,#0080ff 75%,#0000ff 87.5%,#000080 100%)"></div>
<div class="t" style="left:581px;top:106.9px;font-size:7.9px;-webkit-text-stroke:0.1px #000">1600.00</div>
<div class="t" style="left:581px;top:172.7px;font-size:7.9px;-webkit-text-stroke:0.1px #000">1360.00</div>
<div class="t" style="left:581px;top:240.2px;font-size:7.9px;-webkit-text-stroke:0.1px #000">1120.00</div>
<div class="t" style="left:581px;top:307.7px;font-size:7.9px;-webkit-text-stroke:0.1px #000">880.00</div>
<div class="t" style="left:581px;top:376.0px;font-size:7.9px;-webkit-text-stroke:0.1px #000">640.00</div>
<div class="t" style="left:581px;top:443.2px;font-size:7.9px;-webkit-text-stroke:0.1px #000">400.00</div>

<div class="t" style="left:262px;top:448px">曲率半径(mm)</div>

<!-- color group -->
<div class="grp" style="left:12px;top:470px;width:610px;height:30px"></div>
<div class="gt" style="left:21px;top:466px;background:#fff">颜色条设置</div>
<div class="t" style="left:19px;top:484px">最小值</div>
<div class="inp" style="left:58px;top:480px;width:108px;height:17px"><span>400</span></div>
<div class="t" style="left:168px;top:484px">最大值</div>
<div class="inp" style="left:210px;top:480px;width:108px;height:17px"><span>1600</span></div>

<!-- 9点曲率 group -->
<div class="grp" style="left:625px;top:110px;width:215px;height:390px"></div>
<div class="gt" style="left:631px;top:105px;background:#fff">9点曲率</div>
<div class="t" style="left:628px;top:122px">产品型号</div>
<div class="a" style="left:734px;top:119px;width:102px;height:17px;background:#e5e5e5;border:1px solid #acacac"></div>
<div class="t" style="left:737.5px;top:122px;font-size:9.8px;-webkit-text-stroke:0;transform:scaleX(0.93);transform-origin:0 50%">M02009</div>
<svg class="a" style="left:826px;top:124px" width="8" height="6"><path d="M0.8 1.2H6.2L3.5 4.4Z" fill="#000"/></svg>

<div class="t" style="left:650px;top:148px">标准曲率值</div>
<div class="t" style="left:699px;top:148px">曲率误差范围:</div>
<div class="t" style="left:770px;top:148px">曲率差值</div>
<div class="t" style="left:817px;top:148px">结果</div>

<div class="t" style="left:628px;top:174px">点<span style="font-size:9.8px;-webkit-text-stroke:0">1</span></div>
<div class="inp" style="left:646px;top:170px;width:51px;height:16px"><span>1290</span></div>
<div class="inp" style="left:699px;top:170px;width:51px;height:16px"><span>30</span></div>
<div class="t" style="left:770px;top:174px;width:35px;text-align:center;font-size:9.3px;-webkit-text-stroke:0.05px #000">26.4608</div>
<div class="res" style="left:815px;top:170px;height:16px;background:#00ff00"></div>
<div class="t" style="left:628px;top:193px">点<span style="font-size:9.8px;-webkit-text-stroke:0">2</span></div>
<div class="inp" style="left:646px;top:189px;width:51px;height:16px"><span>1220</span></div>
<div class="inp" style="left:699px;top:189px;width:51px;height:16px"><span>30</span></div>
<div class="t" style="left:770px;top:193px;width:35px;text-align:center;font-size:9.3px;-webkit-text-stroke:0.05px #000">-45.8468</div>
<div class="res" style="left:815px;top:189px;height:16px;background:#ff0000"></div>
<div class="t" style="left:628px;top:212px">点<span style="font-size:9.8px;-webkit-text-stroke:0">3</span></div>
<div class="inp" style="left:646px;top:208px;width:51px;height:16px"><span>1220</span></div>
<div class="inp" style="left:699px;top:208px;width:51px;height:16px"><span>30</span></div>
<div class="t" style="left:770px;top:212px;width:35px;text-align:center;font-size:9.3px;-webkit-text-stroke:0.05px #000">-37.7003</div>
<div class="res" style="left:815px;top:208px;height:16px;background:#ff0000"></div>
<div class="t" style="left:628px;top:232px">点<span style="font-size:9.8px;-webkit-text-stroke:0">4</span></div>
<div class="inp" style="left:646px;top:228px;width:51px;height:16px"><span>1300</span></div>
<div class="inp" style="left:699px;top:228px;width:51px;height:16px"><span>10</span></div>
<div class="t" style="left:770px;top:232px;width:35px;text-align:center;font-size:9.3px;-webkit-text-stroke:0.05px #000">-66.9102</div>
<div class="res" style="left:815px;top:228px;height:16px;background:#ff0000"></div>
<div class="t" style="left:628px;top:251px">点<span style="font-size:9.8px;-webkit-text-stroke:0">5</span></div>
<div class="inp" style="left:646px;top:247px;width:51px;height:16px"><span>1333</span></div>
<div class="inp" style="left:699px;top:247px;width:51px;height:16px"><span>2000</span></div>
<div class="t" style="left:770px;top:251px;width:35px;text-align:center;font-size:9.3px;-webkit-text-stroke:0.05px #000">59.7855</div>
<div class="res" style="left:815px;top:247px;height:16px;background:#00ff00"></div>
<div class="t" style="left:628px;top:270px">点<span style="font-size:9.8px;-webkit-text-stroke:0">6</span></div>
<div class="inp" style="left:646px;top:266px;width:51px;height:16px"><span>1212</span></div>
<div class="inp" style="left:699px;top:266px;width:51px;height:16px"><span>2000</span></div>
<div class="t" style="left:770px;top:270px;width:35px;text-align:center;font-size:9.3px;-webkit-text-stroke:0.05px #000">-108.396</div>
<div class="res" style="left:815px;top:266px;height:16px;background:#00ff00"></div>
<div class="t" style="left:628px;top:289px">点<span style="font-size:9.8px;-webkit-text-stroke:0">7</span></div>
<div class="inp" style="left:646px;top:285px;width:51px;height:16px"><span>1310</span></div>
<div class="inp" style="left:699px;top:285px;width:51px;height:16px"><span>10</span></div>
<div class="t" style="left:770px;top:289px;width:35px;text-align:center;font-size:9.3px;-webkit-text-stroke:0.05px #000">-9.67211</div>
<div class="res" style="left:815px;top:285px;height:16px;background:#00ff00"></div>
<div class="t" style="left:628px;top:309px">点<span style="font-size:9.8px;-webkit-text-stroke:0">8</span></div>
<div class="inp" style="left:646px;top:305px;width:51px;height:16px"><span>1280</span></div>
<div class="inp" style="left:699px;top:305px;width:51px;height:16px"><span>10</span></div>
<div class="t" style="left:770px;top:309px;width:35px;text-align:center;font-size:9.3px;-webkit-text-stroke:0.05px #000">-55.6362</div>
<div class="res" style="left:815px;top:305px;height:16px;background:#ff0000"></div>
<div class="t" style="left:628px;top:328px">点<span style="font-size:9.8px;-webkit-text-stroke:0">9</span></div>
<div class="inp" style="left:646px;top:324px;width:51px;height:16px"><span>1270</span></div>
<div class="inp" style="left:699px;top:324px;width:51px;height:16px"><span>10</span></div>
<div class="t" style="left:770px;top:328px;width:35px;text-align:center;font-size:9.3px;-webkit-text-stroke:0.05px #000">-65.4316</div>
<div class="res" style="left:815px;top:324px;height:16px;background:#ff0000"></div>

<div class="btn" style="left:629px;top:344px;width:207px;height:17px">设置</div>

<!-- bottom groups -->
<div class="grp" style="left:8px;top:515px;width:277px;height:45px"></div>
<div class="gt" style="left:14px;top:510px">控制</div>
<div class="grp" style="left:288px;top:515px;width:278px;height:45px"></div>
<div class="gt" style="left:294px;top:510px">凹凸选择</div>
<div class="a" style="left:291.5px;top:527.5px;width:9px;height:9px;border-radius:50%;border:1px solid #bcbcbc;background:#f0f0f0"></div>
<div class="a" style="left:294px;top:530px;width:4px;height:4px;border-radius:50%;background:#a8a8a8"></div>
<div class="t" style="left:305px;top:527px;color:#6d6d6d;-webkit-text-stroke:0.08px #6d6d6d">凸面</div>
<div class="a" style="left:291.5px;top:545.5px;width:9px;height:9px;border-radius:50%;border:1px solid #bcbcbc;background:#f8f8f8"></div>
<div class="t" style="left:305px;top:545px;color:#6d6d6d;-webkit-text-stroke:0.08px #6d6d6d">凹面</div>

<div class="grp" style="left:570px;top:515px;width:276px;height:45px"></div>
<div class="gt" style="left:575px;top:510px">数据处理</div>
<div class="a" style="left:572px;top:536px;width:10px;height:10px;border:1px solid #333;background:#fff"></div>
<div class="t" style="left:585px;top:536px">保存数据</div>
<div class="a" style="left:708px;top:536px;width:10px;height:10px;border:1px solid #333;background:#fff"></div>
<svg class="a" style="left:708px;top:536px" width="10" height="10"><path d="M2 5L4 7.2L8 2.8" fill="none" stroke="#222" stroke-width="1"/></svg>
<div class="t" style="left:721px;top:536px">旋转180度</div>

<div class="btn" style="left:743px;top:571px;width:52px;height:17px">OK</div>
<div class="btn" style="left:799px;top:571px;width:52px;height:17px">Cancel</div>

<div class="a" style="left:0;top:591px;width:850px;height:5px;background:linear-gradient(#c8c8c8,#f4f4f4 40%,#fff)"></div>
<div class="a" style="left:1px;top:594px;width:2px;height:2px;background:#999"></div><div class="a" style="left:13px;top:594px;width:3px;height:2px;background:#999"></div><div class="a" style="left:18px;top:594px;width:2px;height:2px;background:#999"></div><div class="a" style="left:36px;top:594px;width:3px;height:2px;background:#999"></div><div class="a" style="left:40px;top:594px;width:2px;height:2px;background:#999"></div><div class="a" style="left:44px;top:594px;width:2px;height:2px;background:#999"></div><div class="a" style="left:62px;top:594px;width:3px;height:2px;background:#999"></div><div class="a" style="left:66px;top:594px;width:2px;height:2px;background:#999"></div><div class="a" style="left:73px;top:594px;width:3px;height:2px;background:#999"></div><div class="a" style="left:80px;top:594px;width:2px;height:2px;background:#999"></div><div class="a" style="left:84px;top:594px;width:2px;height:2px;background:#999"></div><div class="a" style="left:88px;top:594px;width:3px;height:2px;background:#999"></div><div class="a" style="left:96px;top:594px;width:2px;height:2px;background:#999"></div><div class="a" style="left:101px;top:594px;width:3px;height:2px;background:#999"></div><div class="a" style="left:111px;top:594px;width:2px;height:2px;background:#999"></div>
</body></html>
